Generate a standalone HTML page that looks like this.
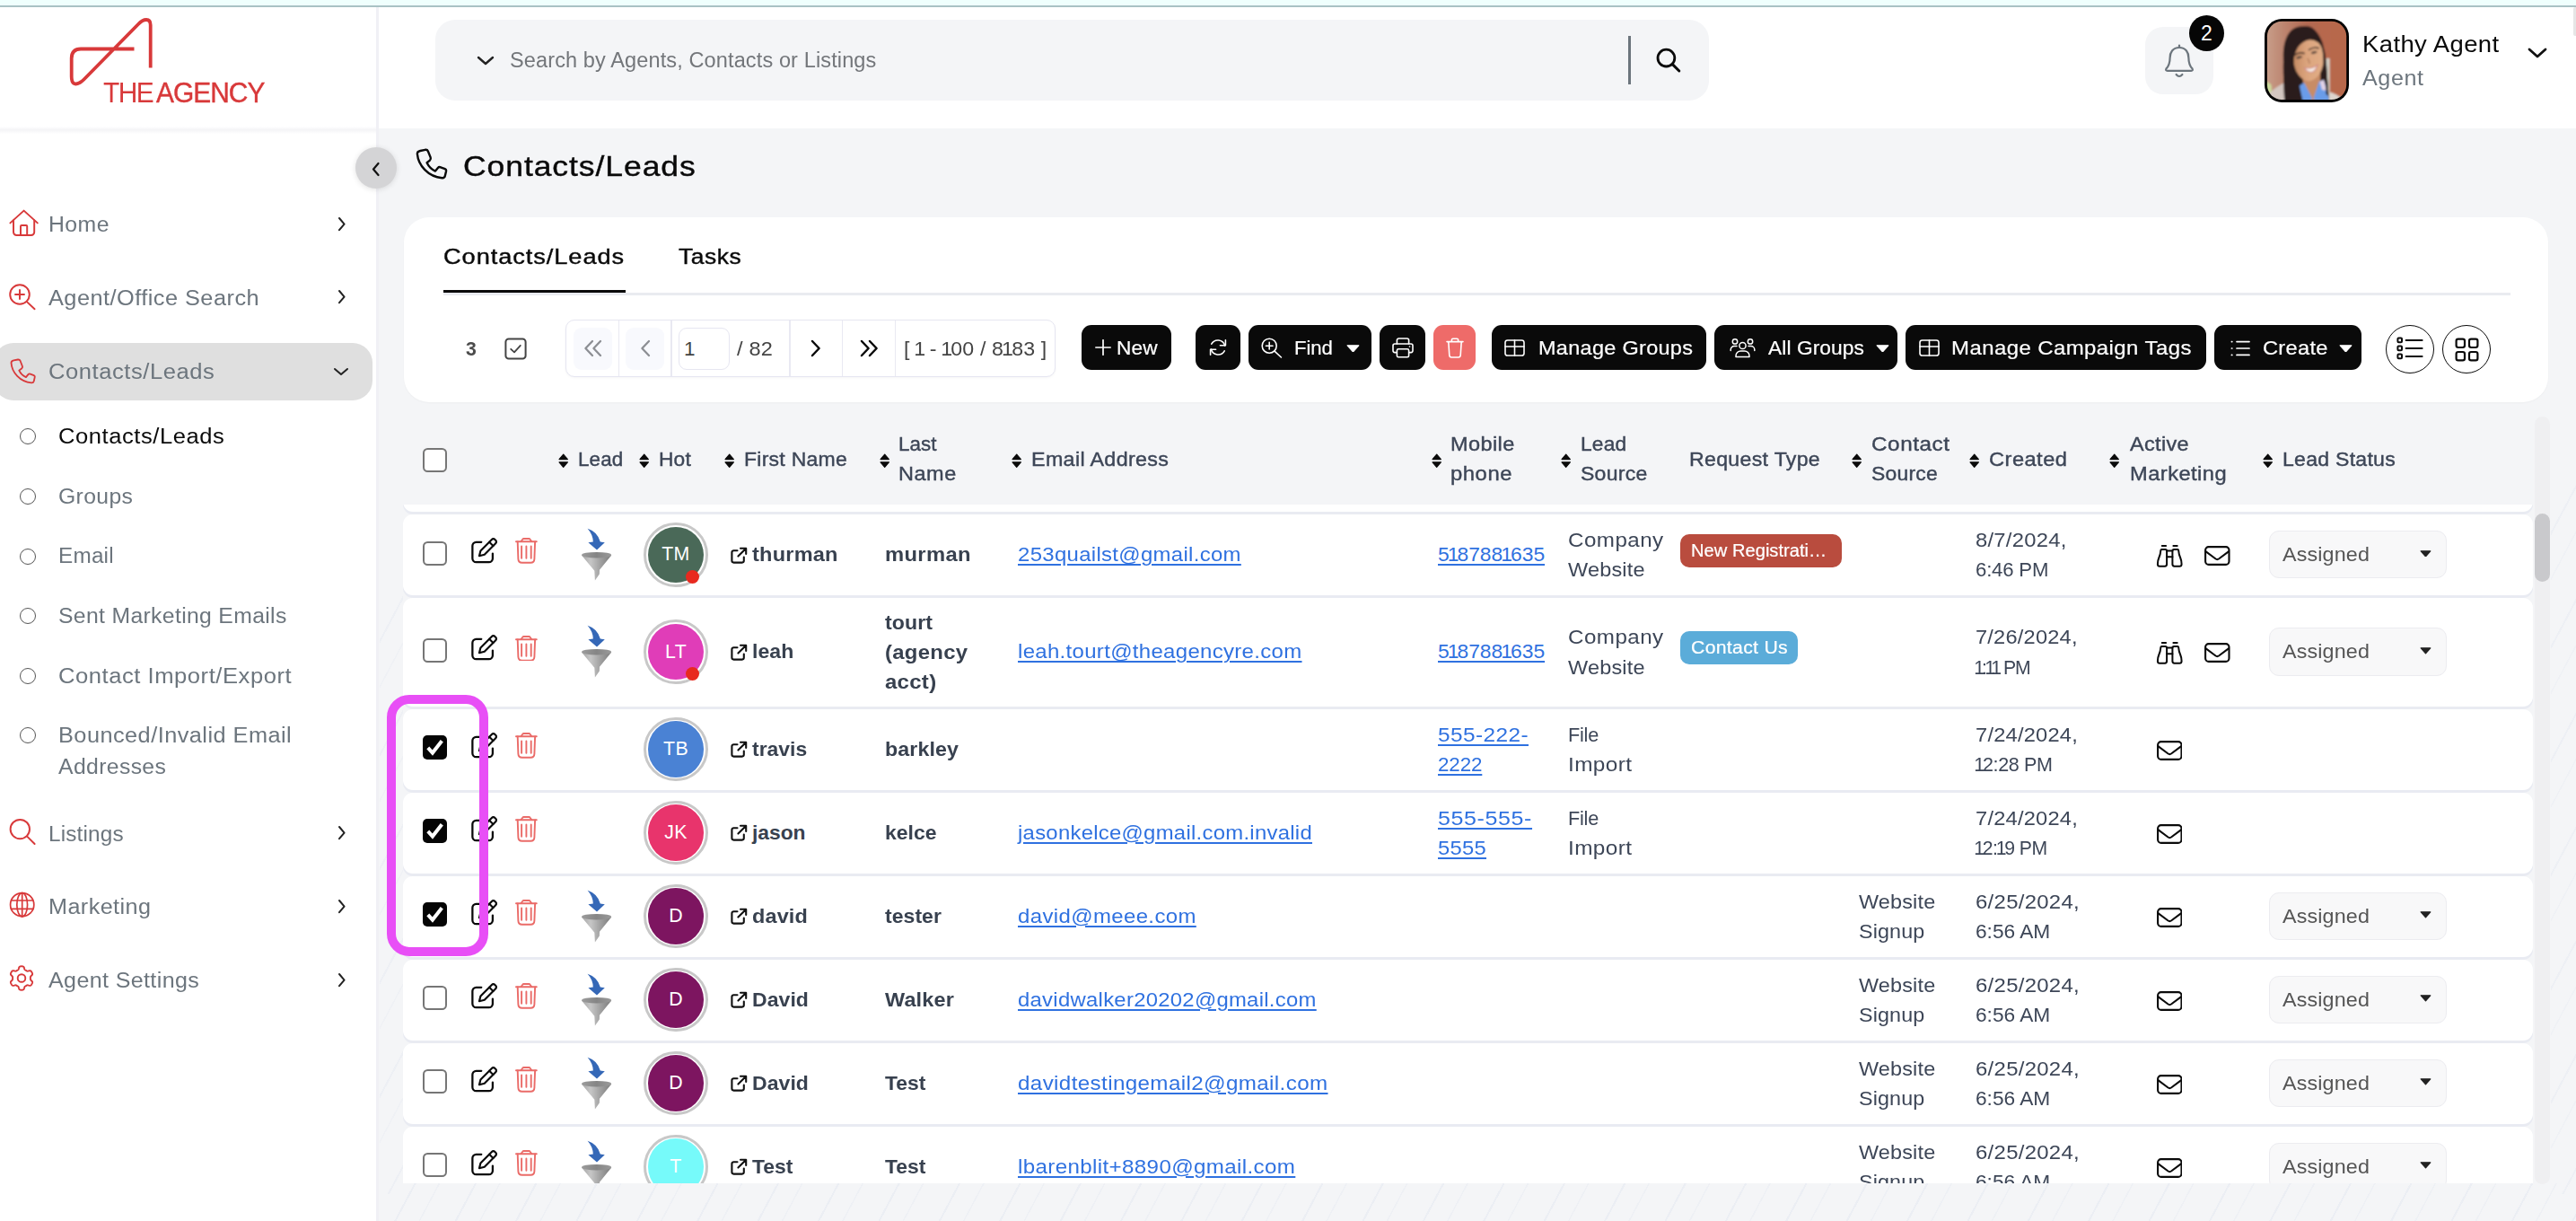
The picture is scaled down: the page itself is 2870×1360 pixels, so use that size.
<!DOCTYPE html>
<html><head><meta charset="utf-8"><title>Contacts/Leads</title>
<style>
html,body{margin:0;padding:0;}
body{width:2870px;height:1360px;overflow:hidden;position:relative;background:#f4f5f7;font-family:"Liberation Sans",sans-serif;}
.b{position:absolute;box-sizing:border-box;display:block;}
.t{position:absolute;white-space:nowrap;display:block;}
.m{-webkit-text-stroke:0.4px currentColor;}
.mw{-webkit-text-stroke:0.22px currentColor;}
.lnk{text-decoration:underline;text-decoration-thickness:1.7px;text-underline-offset:3px;}
</style></head><body>
<svg width="0" height="0" style="position:absolute"><defs><filter id="blur1" x="-10%" y="-10%" width="120%" height="120%"><feGaussianBlur stdDeviation="0.55"/></filter><filter id="blur2" x="-10%" y="-10%" width="120%" height="120%"><feGaussianBlur stdDeviation="0.95"/></filter></defs></svg>

<div class="b" style="left:0px;top:0px;width:2870px;height:8px;background:#effffd;border-bottom:2px solid #a9c2c4;"></div>
<div class="b" style="left:421px;top:8px;width:2449px;height:135px;background:#fff;"></div>
<div class="b" style="left:423px;top:1318px;width:2447px;height:42px;background:repeating-linear-gradient(118deg, rgba(205,214,232,0) 0 34px, rgba(205,214,232,0.22) 34px 36px, rgba(205,214,232,0) 36px 58px, rgba(205,214,232,0.16) 58px 59.5px);"></div>
<div class="b" style="left:423px;top:640px;width:26px;height:690px;background:repeating-linear-gradient(118deg, rgba(205,214,232,0) 0 34px, rgba(205,214,232,0.22) 34px 36px, rgba(205,214,232,0) 36px 58px, rgba(205,214,232,0.16) 58px 59.5px);opacity:0.8;"></div>
<div class="b" style="left:2842px;top:520px;width:28px;height:810px;background:repeating-linear-gradient(118deg, rgba(205,214,232,0) 0 34px, rgba(205,214,232,0.22) 34px 36px, rgba(205,214,232,0) 36px 58px, rgba(205,214,232,0.16) 58px 59.5px);opacity:0.8;"></div>
<div class="b" style="left:485px;top:22px;width:1419px;height:90px;background:#f4f5f7;border-radius:22px;"></div>
<svg class="b" style="left:531px;top:61.5px;" width="20" height="12" viewBox="0 0 20 12"><path d="M2 2 L10 9 L18 2" fill="none" stroke="#222" stroke-width="2.4" stroke-linecap="round" stroke-linejoin="round"/></svg>
<span class="t" style="left:568px;top:52.3px;font-size:23px;line-height:30px;color:#73767a;letter-spacing:0.12px;transform:scaleX(1.022);transform-origin:0 50%;">Search by Agents, Contacts or Listings</span>
<div class="b" style="left:1814px;top:40px;width:3px;height:54px;background:#6c757d;"></div>
<svg class="b" style="left:1844px;top:52px;" width="30" height="30" viewBox="0 0 30 30"><circle cx="12.4" cy="12.6" r="9.4" fill="none" stroke="#0a0a0a" stroke-width="2.8"/><path d="M19.4 19.6 L26.8 27" stroke="#0a0a0a" stroke-width="3" stroke-linecap="round"/></svg>
<div class="b" style="left:2390px;top:30px;width:76px;height:75px;background:#f4f5f7;border-radius:20px;"></div>
<svg class="b" style="left:2411px;top:49px;" width="34" height="40" viewBox="0 0 34 40"><g fill="none" stroke="#6c757d" stroke-width="2.2" stroke-linecap="round" stroke-linejoin="round"><path d="M17 1.6 V4"/><path d="M17 4 C9.6 4 6.6 9.6 6.6 15.4 C6.6 22.6 4.6 25.2 2.4 27.6 Q1.4 29.8 3.8 29.8 H30.2 Q32.6 29.8 31.6 27.6 C29.4 25.2 27.4 22.6 27.4 15.4 C27.4 9.6 24.4 4 17 4 Z"/><path d="M13.6 34 Q17 38 20.4 34"/></g></svg>
<div class="b" style="left:2439px;top:17px;width:39px;height:40px;background:#060606;border-radius:50%;"></div>
<span class="t" style="left:2439px;top:21.5px;font-size:23px;line-height:30px;color:#fff;width:39px;text-align:center;">2</span>
<svg class="b" style="left:2523px;top:21px;" width="94" height="93" viewBox="0 0 94 93"><defs><clipPath id="avc"><rect x="2.9" y="2.8" width="88.3" height="87.2" rx="16.5"/></clipPath><linearGradient id="bk" x1="0" y1="0" x2="1" y2="0"><stop offset="0" stop-color="#c9a08c"/><stop offset="0.22" stop-color="#bd8671"/><stop offset="0.5" stop-color="#b36a52"/><stop offset="1" stop-color="#b5664a"/></linearGradient><linearGradient id="fc" x1="0" y1="0" x2="1" y2="0"><stop offset="0" stop-color="#c58a63"/><stop offset="0.45" stop-color="#dca57e"/><stop offset="1" stop-color="#e2ae87"/></linearGradient></defs><rect x="0" y="0" width="94" height="93" rx="19.5" fill="#000"/><g clip-path="url(#avc)"><g filter="url(#blur2)"><rect x="0" y="0" width="94" height="93" fill="url(#bk)"/><path d="M60 0 H94 V93 H74 Z" fill="#b9694c" opacity="0.6"/><rect x="69" y="44" width="3.6" height="42" fill="#d6d3c8"/><path d="M0 70 Q5 70 7.5 74 L8 82 L0 84 Z" fill="#cbdc9c"/><path d="M2 92 L4 84 Q12 76 24 70 L42 76 L46 93 Z" fill="#d3c6c0"/><path d="M66 93 L70 81 Q80 83 88 90 L90 93 Z" fill="#ddd6cf"/><path d="M22.2 93 Q21 64 20.8 44 Q20 22 30 12.4 Q36 8 42 8.2 Q48 7.6 52.6 9.4 Q60 14 64.6 26.6 Q68 38 69 50 Q70 66 71.4 84 L72 93 Z" fill="#2a1d1b"/><path d="M42 60 L62 58 L62 80 L54 91 L44 80 Z" fill="#c88c66"/><path d="M37 76 L44 71 L54 90 L61 69.5 L66 68 L71 84 L72 93 L40 93 Z" fill="#6a9ce9"/><path d="M61.5 70 L66 68 L69 80 L64 79 Z" fill="#e3d3e6"/><path d="M50 93 L54 88 L57 93 Z" fill="#c88c66"/><path d="M44 25 Q52 21 60 26.6 Q65.4 32 65.6 44 Q65.8 54 61.6 61 Q56 69 49 69.4 Q41 69 35.4 58.6 Q31.6 50 32.4 40 Q34 30 44 25 Z" fill="url(#fc)"/><path d="M20.8 60 Q20 30 31 16 Q42 8 54 12 Q62 18 64.6 28 Q58 22 50 23 Q42 25 37 32 Q32.5 40 32.4 50 Q33 62 37.4 66 Q39 76 43 93 L22.2 93 Z" fill="#2a1d1b"/><path d="M64 28 Q68 40 69 52 Q70 70 71.4 86 L68.6 84 Q68 60 65.6 46 Z" fill="#2a1d1b"/><path d="M33.6 40.4 Q38.4 36.8 44 38.4 M49.6 34.4 Q55 30.8 60 32.6" stroke="#3a2a24" stroke-width="1.7" fill="none" stroke-linecap="round"/><ellipse cx="38.6" cy="42.9" rx="3.4" ry="1.5" fill="#5a463c" transform="rotate(-14 38.6 42.9)"/><ellipse cx="55.2" cy="37.4" rx="3.4" ry="1.5" fill="#5a463c" transform="rotate(-14 55.2 37.4)"/><path d="M48 44 Q50.4 48 49.8 50" stroke="#b98362" stroke-width="1.6" fill="none"/><path d="M44.4 54.6 Q52 56.4 59.2 51.2 Q56 60.6 50.4 59.4 Q46.6 58.6 44.4 54.6 Z" fill="#f7efe9" stroke="#d08a84" stroke-width="1.1"/></g></g></svg>
<span class="t" style="left:2632px;top:32.2px;font-size:26px;line-height:34px;color:#0a0a0a;letter-spacing:0.37px;transform:scaleX(1.057);transform-origin:0 50%;">Kathy Agent</span>
<span class="t" style="left:2632px;top:71.8px;font-size:23px;line-height:30px;color:#6c757d;letter-spacing:0.54px;transform:scaleX(1.092);transform-origin:0 50%;">Agent</span>
<svg class="b" style="left:2816px;top:52.5px;" width="22" height="13" viewBox="0 0 22 13"><path d="M2 2 L11 10 L20 2" fill="none" stroke="#111" stroke-width="2.8" stroke-linecap="round" stroke-linejoin="round"/></svg>
<div class="b" style="left:2867px;top:8px;width:3px;height:32px;background:#e6e6e6;border-radius:2px 0 0 2px;"></div>
<div class="b" style="left:0px;top:8px;width:421.5px;height:1352px;background:#fff;border-right:3px solid #f0f0f5;"></div>
<div class="b" style="left:0px;top:141px;width:418.5px;height:8px;background:linear-gradient(#fff,#f4f4f6 45%,#fff);"></div>
<svg class="b" style="left:70px;top:14px;" width="240" height="110" viewBox="0 0 240 110"><path d="M79.5 40.5 H20 Q9.7 40.5 9.7 51 V71 Q9.7 83 19 78 Q21.5 76.5 23.5 74.5 L84 13 Q88.5 8 93 8 Q97.7 8 97.7 14 V61.5" fill="none" stroke="#d8393a" stroke-width="3.8" stroke-linejoin="round"/></svg>
<span class="t" style="left:115px;top:83.3px;font-size:30.5px;line-height:40px;color:#d8393a;transform:scaleX(0.98);transform-origin:left center;-webkit-text-stroke:0.4px #d8393a;"><span style="letter-spacing:-1.6px;-webkit-text-stroke:0">THE</span><span style="letter-spacing:-1px;margin-left:4px">AGENCY</span></span>
<div class="b" style="left:395.5px;top:164px;width:46px;height:46px;background:#d4d4d6;border-radius:50%;box-shadow:0 1px 6px rgba(0,0,0,0.12);"></div>
<svg class="b" style="left:412.75px;top:179.5px;" width="10.5" height="17.0" viewBox="0 0 10.5 17.0"><path d="M8.5 2 L3 8.5 L8.5 15.0" fill="none" stroke="#111" stroke-width="2.2" stroke-linecap="round" stroke-linejoin="round"/></svg>
<svg class="b" style="left:10px;top:233px;" width="34" height="31" viewBox="0 0 34 31"><g fill="none" stroke="#d8393a" stroke-width="1.95" stroke-linecap="round" stroke-linejoin="round"><path d="M1.4 15.4 L16.6 1.6 L31.8 15.4"/><path d="M5 12.4 V25.6 a3.4 3.4 0 0 0 3.4 3.4 H24.8 a3.4 3.4 0 0 0 3.4 -3.4 V12.4"/><path d="M13 28.8 V19 a1 1 0 0 1 1 -1 H19.2 a1 1 0 0 1 1 1 V28.8"/></g></svg><span class="t" style="left:54.3px;top:235.2px;font-size:23.5px;line-height:31px;color:#6c757d;letter-spacing:0.44px;transform:scaleX(1.055);transform-origin:0 50%;">Home</span><svg class="b" style="left:375.9px;top:240.79999999999998px;" width="10.6" height="17.2" viewBox="0 0 10.6 17.2"><path d="M2 2 L7.6 8.6 L2 15.2" fill="none" stroke="#222" stroke-width="2.0" stroke-linecap="round" stroke-linejoin="round"/></svg>
<svg class="b" style="left:9px;top:314.6px;" width="32" height="32" viewBox="0 0 32 32"><g fill="none" stroke="#d8393a" stroke-width="1.95" stroke-linecap="round" stroke-linejoin="round"><circle cx="13" cy="13" r="10.8"/><path d="M21.2 21.4 L29.6 29.2 M8 13 H18 M13 8 V18"/></g></svg><span class="t" style="left:54.3px;top:316.5px;font-size:23.5px;line-height:31px;color:#6c757d;letter-spacing:0.43px;transform:scaleX(1.078);transform-origin:0 50%;">Agent/Office Search</span><svg class="b" style="left:375.9px;top:322.09999999999997px;" width="10.6" height="17.2" viewBox="0 0 10.6 17.2"><path d="M2 2 L7.6 8.6 L2 15.2" fill="none" stroke="#222" stroke-width="2.0" stroke-linecap="round" stroke-linejoin="round"/></svg>
<div class="b" style="left:-7px;top:382.0px;width:422px;height:64px;background:#dfdfdf;border-radius:22px;"></div><svg class="b" style="left:10.5px;top:398.5px;" width="29" height="29" viewBox="0 0 31 31"><g fill="none" stroke="#d8393a" stroke-width="1.95" stroke-linecap="round" stroke-linejoin="round"><path d="M4.6 2.6 L9.6 1.6 Q11.6 1.4 12.4 3.2 L14.8 9.4 Q15.4 11 14 12.2 L11 14.6 Q13.6 20 19.2 22.6 L21.8 19.4 Q22.8 18.2 24.4 18.8 L28.6 20.4 Q30 21 29.6 22.8 L28.6 27.2 Q28 29.4 25.6 29.2 C12 28 2.4 17 1.6 5.6 Q1.6 3.2 4.6 2.6 Z"/></g></svg><span class="t" style="left:54.3px;top:399.0px;font-size:23.5px;line-height:31px;color:#6c757d;letter-spacing:0.51px;transform:scaleX(1.088);transform-origin:0 50%;">Contacts/Leads</span><svg class="b" style="left:371px;top:408.5px;" width="18" height="11" viewBox="0 0 18 11"><path d="M2 2 L9 8 L16 2" fill="none" stroke="#222" stroke-width="2.0" stroke-linecap="round" stroke-linejoin="round"/></svg>
<svg class="b" style="left:9.6px;top:910.6px;" width="31" height="32" viewBox="0 0 31 32"><g fill="none" stroke="#d8393a" stroke-width="1.95" stroke-linecap="round" stroke-linejoin="round"><circle cx="12.3" cy="12.6" r="10.7"/><path d="M20.2 20.6 L28.6 29"/></g></svg><span class="t" style="left:54.3px;top:913.5px;font-size:23.5px;line-height:31px;color:#6c757d;letter-spacing:0.17px;transform:scaleX(1.034);transform-origin:0 50%;">Listings</span><svg class="b" style="left:375.9px;top:919.1px;" width="10.6" height="17.2" viewBox="0 0 10.6 17.2"><path d="M2 2 L7.6 8.6 L2 15.2" fill="none" stroke="#222" stroke-width="2.0" stroke-linecap="round" stroke-linejoin="round"/></svg>
<svg class="b" style="left:9.6px;top:993.2px;" width="29.4" height="29.4" viewBox="0 0 30 30"><g fill="none" stroke="#d8393a" stroke-width="1.75" stroke-linecap="round" stroke-linejoin="round"><circle cx="15" cy="15" r="13.4"/><ellipse cx="15" cy="15" rx="6" ry="13.4"/><path d="M15 1.6 V28.4 M2.6 10.2 H27.4 M2.6 19.8 H27.4"/></g></svg><span class="t" style="left:54.3px;top:995.0px;font-size:23.5px;line-height:31px;color:#6c757d;letter-spacing:0.41px;transform:scaleX(1.071);transform-origin:0 50%;">Marketing</span><svg class="b" style="left:375.9px;top:1000.6px;" width="10.6" height="17.2" viewBox="0 0 10.6 17.2"><path d="M2 2 L7.6 8.6 L2 15.2" fill="none" stroke="#222" stroke-width="2.0" stroke-linecap="round" stroke-linejoin="round"/></svg>
<svg class="b" style="left:8.8px;top:1074.4px;" width="30" height="31" viewBox="0 0 30 31"><g fill="none" stroke="#d8393a" stroke-width="1.9" stroke-linecap="round" stroke-linejoin="round"><circle cx="15" cy="15.5" r="4.3"/><path d="M24.90 15.50 L24.90 15.07 L24.89 14.63 L24.92 14.19 L25.04 13.73 L25.43 13.19 L26.16 12.51 L26.85 11.77 L27.13 11.09 L27.10 10.49 L26.93 9.94 L26.70 9.41 L26.43 8.90 L26.13 8.41 L25.79 7.95 L25.39 7.53 L24.88 7.21 L24.16 7.11 L23.17 7.33 L22.21 7.63 L21.55 7.69 L21.09 7.56 L20.70 7.36 L20.32 7.14 L19.95 6.93 L19.57 6.71 L19.20 6.50 L18.83 6.26 L18.49 5.92 L18.21 5.32 L17.99 4.34 L17.69 3.37 L17.24 2.79 L16.71 2.52 L16.15 2.38 L15.58 2.32 L15.00 2.30 L14.42 2.32 L13.85 2.38 L13.29 2.52 L12.76 2.79 L12.31 3.37 L12.01 4.34 L11.79 5.32 L11.51 5.92 L11.17 6.26 L10.80 6.50 L10.43 6.71 L10.05 6.93 L9.68 7.14 L9.30 7.36 L8.91 7.56 L8.45 7.69 L7.79 7.63 L6.83 7.33 L5.84 7.11 L5.12 7.21 L4.61 7.53 L4.21 7.95 L3.87 8.41 L3.57 8.90 L3.30 9.41 L3.07 9.94 L2.90 10.49 L2.87 11.09 L3.15 11.77 L3.84 12.51 L4.57 13.19 L4.96 13.73 L5.08 14.19 L5.11 14.63 L5.10 15.07 L5.10 15.50 L5.10 15.93 L5.11 16.37 L5.08 16.81 L4.96 17.27 L4.57 17.81 L3.84 18.49 L3.15 19.23 L2.87 19.91 L2.90 20.51 L3.07 21.06 L3.30 21.59 L3.57 22.10 L3.87 22.59 L4.21 23.05 L4.61 23.47 L5.12 23.79 L5.84 23.89 L6.83 23.67 L7.79 23.37 L8.45 23.31 L8.91 23.44 L9.30 23.64 L9.68 23.86 L10.05 24.07 L10.43 24.29 L10.80 24.50 L11.17 24.74 L11.51 25.08 L11.79 25.68 L12.01 26.66 L12.31 27.63 L12.76 28.21 L13.29 28.48 L13.85 28.62 L14.42 28.68 L15.00 28.70 L15.58 28.68 L16.15 28.62 L16.71 28.48 L17.24 28.21 L17.69 27.63 L17.99 26.66 L18.21 25.68 L18.49 25.08 L18.83 24.74 L19.20 24.50 L19.57 24.29 L19.95 24.07 L20.32 23.86 L20.70 23.64 L21.09 23.44 L21.55 23.31 L22.21 23.37 L23.17 23.67 L24.16 23.89 L24.88 23.79 L25.39 23.47 L25.79 23.05 L26.13 22.59 L26.43 22.10 L26.70 21.59 L26.93 21.06 L27.10 20.51 L27.13 19.91 L26.85 19.23 L26.16 18.49 L25.43 17.81 L25.04 17.27 L24.92 16.81 L24.89 16.37 L24.90 15.93 Z"/></g></svg><span class="t" style="left:54.3px;top:1077.0px;font-size:23.5px;line-height:31px;color:#6c757d;letter-spacing:0.36px;transform:scaleX(1.065);transform-origin:0 50%;">Agent Settings</span><svg class="b" style="left:375.9px;top:1082.6000000000001px;" width="10.6" height="17.2" viewBox="0 0 10.6 17.2"><path d="M2 2 L7.6 8.6 L2 15.2" fill="none" stroke="#222" stroke-width="2.0" stroke-linecap="round" stroke-linejoin="round"/></svg>
<div class="b" style="left:21.8px;top:477px;width:18.2px;height:18.2px;border:1.5px solid #555;border-radius:50%;"></div><span class="t" style="left:64.8px;top:470.5px;font-size:23.5px;line-height:31px;color:#0a0a0a;letter-spacing:0.51px;transform:scaleX(1.088);transform-origin:0 50%;">Contacts/Leads</span>
<div class="b" style="left:21.8px;top:544px;width:18.2px;height:18.2px;border:1.5px solid #555;border-radius:50%;"></div><span class="t" style="left:64.8px;top:537.5px;font-size:23.5px;line-height:31px;color:#6c757d;letter-spacing:0.34px;transform:scaleX(1.052);transform-origin:0 50%;">Groups</span>
<div class="b" style="left:21.8px;top:610.5px;width:18.2px;height:18.2px;border:1.5px solid #555;border-radius:50%;"></div><span class="t" style="left:64.8px;top:604.0px;font-size:23.5px;line-height:31px;color:#6c757d;letter-spacing:0.21px;transform:scaleX(1.034);transform-origin:0 50%;">Email</span>
<div class="b" style="left:21.8px;top:677px;width:18.2px;height:18.2px;border:1.5px solid #555;border-radius:50%;"></div><span class="t" style="left:64.8px;top:670.5px;font-size:23.5px;line-height:31px;color:#6c757d;letter-spacing:0.31px;transform:scaleX(1.054);transform-origin:0 50%;">Sent Marketing Emails</span>
<div class="b" style="left:21.8px;top:744px;width:18.2px;height:18.2px;border:1.5px solid #555;border-radius:50%;"></div><span class="t" style="left:64.8px;top:737.5px;font-size:23.5px;line-height:31px;color:#6c757d;letter-spacing:0.48px;transform:scaleX(1.090);transform-origin:0 50%;">Contact Import/Export</span>
<div class="b" style="left:21.8px;top:810px;width:18.2px;height:18.2px;border:1.5px solid #555;border-radius:50%;"></div><span class="t" style="left:64.8px;top:803.5px;font-size:23.5px;line-height:31px;color:#6c757d;letter-spacing:0.43px;transform:scaleX(1.077);transform-origin:0 50%;">Bounced/Invalid Email</span>
<span class="t" style="left:64.8px;top:838.5px;font-size:23.5px;line-height:31px;color:#6c757d;letter-spacing:0.34px;transform:scaleX(1.054);transform-origin:0 50%;">Addresses</span>
<svg class="b" style="left:463px;top:165px;" width="36" height="36" viewBox="0 0 36 36"><path d="M5.2 3 L10.8 1.8 Q13 1.4 13.9 3.5 L16.7 10.4 Q17.4 12.2 15.9 13.6 L12.6 16.3 Q15.6 22.6 22 25.6 L24.9 22 Q26.1 20.6 27.9 21.3 L32.8 23.2 Q34.4 23.9 34 25.9 L32.8 31 Q32.2 33.5 29.5 33.2 C14 31.9 3 19.4 1.9 6.4 Q1.8 3.7 5.2 3 Z" fill="none" stroke="#0a0a0a" stroke-width="2.4" stroke-linejoin="round"/></svg>
<span class="t m" style="left:516px;top:163.9px;font-size:32px;line-height:42px;color:#0a0a0a;font-weight:500;letter-spacing:0.84px;transform:scaleX(1.109);transform-origin:0 50%;">Contacts/Leads</span>
<div class="b" style="left:450px;top:242px;width:2389px;height:206px;background:#fff;border-radius:28px;box-shadow:0 1px 2px rgba(0,0,0,0.03);"></div>
<span class="t m" style="left:494.4px;top:270.2px;font-size:24.5px;line-height:32px;color:#0a0a0a;font-weight:500;letter-spacing:0.84px;transform:scaleX(1.110);transform-origin:0 50%;">Contacts/Leads</span>
<span class="t m" style="left:756px;top:270.2px;font-size:24.5px;line-height:32px;color:#0a0a0a;font-weight:500;letter-spacing:0.49px;transform:scaleX(1.078);transform-origin:0 50%;">Tasks</span>
<div class="b" style="left:494px;top:326px;width:2303px;height:2.5px;background:#e9ebf0;"></div>
<div class="b" style="left:494px;top:322.8px;width:203px;height:3.4px;background:#0a0a0a;"></div>
<span class="t" style="left:518.6px;top:373.5px;font-size:22.5px;line-height:29px;color:#4b4b4b;font-weight:700;letter-spacing:-0.41px;transform:scaleX(0.942);transform-origin:0 50%;">3</span>
<svg class="b" style="left:562px;top:376px;" width="25" height="25" viewBox="0 0 25 25"><rect x="1.4" y="1.4" width="22.2" height="22.2" rx="3.4" fill="none" stroke="#444" stroke-width="2"/><path d="M7.2 12.8 L11 16.4 L17.8 8.8" fill="none" stroke="#444" stroke-width="1.8" stroke-linecap="round" stroke-linejoin="round"/></svg>
<div class="b" style="left:630px;top:356px;width:546px;height:64px;background:#fff;border:1.5px solid #e6e6f1;border-radius:10px;box-shadow:0 1px 3px rgba(0,0,0,0.04);"></div>
<div class="b" style="left:688.9px;top:357px;width:1.2px;height:62px;background:#e9e9f2;"></div>
<div class="b" style="left:747.4px;top:357px;width:1.2px;height:62px;background:#e9e9f2;"></div>
<div class="b" style="left:879.4px;top:357px;width:1.2px;height:62px;background:#e9e9f2;"></div>
<div class="b" style="left:938.0px;top:357px;width:1.2px;height:62px;background:#e9e9f2;"></div>
<div class="b" style="left:997.1px;top:357px;width:1.2px;height:62px;background:#e9e9f2;"></div>
<div class="b" style="left:639px;top:365px;width:43px;height:47px;background:#f8f9fd;border-radius:9px;"></div>
<div class="b" style="left:697px;top:365px;width:43px;height:47px;background:#f8f9fd;border-radius:9px;"></div>
<svg class="b" style="left:650px;top:378px;" width="22" height="20" viewBox="0 0 22 20"><path d="M10 2 L2.4 10 L10 18 M19 2 L11.4 10 L19 18" fill="none" stroke="#8d8f94" stroke-width="2.3" stroke-linecap="round" stroke-linejoin="round"/></svg>
<svg class="b" style="left:712px;top:378px;" width="14" height="20" viewBox="0 0 14 20"><path d="M11 2 L3.4 10 L11 18" fill="none" stroke="#8d8f94" stroke-width="2.3" stroke-linecap="round" stroke-linejoin="round"/></svg>
<div class="b" style="left:756px;top:365px;width:57px;height:47px;background:#fff;border:1.5px solid #e6e6f1;border-radius:9px;"></div>
<span class="t" style="left:762px;top:373.5px;font-size:22.5px;line-height:29px;color:#444;">1</span>
<span class="t" style="left:820.8px;top:373.5px;font-size:22.5px;line-height:29px;color:#444;letter-spacing:0.22px;transform:scaleX(1.046);transform-origin:0 50%;">/ 82</span>
<svg class="b" style="left:902px;top:378px;" width="14" height="20" viewBox="0 0 14 20"><path d="M3 2 L10.6 10 L3 18" fill="none" stroke="#0a0a0a" stroke-width="2.5" stroke-linecap="round" stroke-linejoin="round"/></svg>
<svg class="b" style="left:957px;top:378px;" width="22" height="20" viewBox="0 0 22 20"><path d="M3 2 L10.6 10 L3 18 M12 2 L19.6 10 L12 18" fill="none" stroke="#0a0a0a" stroke-width="2.5" stroke-linecap="round" stroke-linejoin="round"/></svg>
<span class="t" style="left:1006.7px;top:373.5px;font-size:22.5px;line-height:29px;color:#444;letter-spacing:0.13px;transform:scaleX(1.029);transform-origin:0 50%;">[ <span style="margin:0 -0.085em">1</span> - <span style="margin:0 -0.085em">1</span>00 / 8<span style="margin:0 -0.085em">1</span>83 ]</span>
<div class="b" style="left:1205px;top:362px;width:100px;height:50px;background:#0a0a0a;border-radius:11px;"></div>
<svg class="b" style="left:1219.7px;top:378px;" width="18" height="18" viewBox="0 0 18 18"><g fill="none" stroke="#fff" stroke-width="1.7" stroke-linecap="round" stroke-linejoin="round"><path d="M9 0.8 V17.2 M0.8 9 H17.2"/></g></svg>
<span class="t mw" style="left:1244.4px;top:373.0px;font-size:22.5px;line-height:29px;color:#fff;font-weight:500;letter-spacing:0.07px;transform:scaleX(1.008);transform-origin:0 50%;">New</span>
<div class="b" style="left:1332px;top:362px;width:50px;height:50px;background:#0a0a0a;border-radius:11px;"></div>
<svg class="b" style="left:1346px;top:377px;" width="22" height="20" viewBox="0 0 22 20"><g fill="none" stroke="#fff" stroke-width="1.6" stroke-linecap="round" stroke-linejoin="round"><path d="M18.6 8 A8 8 0 0 0 3.8 6.2 M3.4 12 A8 8 0 0 0 18.2 13.8"/><path d="M19.4 1.8 V7.8 H13.4 M2.6 18.2 V12.2 H8.6"/></g></svg>
<div class="b" style="left:1391px;top:362px;width:137px;height:50px;background:#0a0a0a;border-radius:11px;"></div>
<svg class="b" style="left:1404.5px;top:376px;" width="24" height="23" viewBox="0 0 24 23"><g fill="none" stroke="#fff" stroke-width="1.6" stroke-linecap="round" stroke-linejoin="round"><circle cx="9.2" cy="9.2" r="8"/><path d="M15 15.2 L22.4 22 M5.4 9.2 H13 M9.2 5.4 V13"/></g></svg>
<span class="t mw" style="left:1442.4px;top:373.0px;font-size:22.5px;line-height:29px;color:#fff;font-weight:500;letter-spacing:-0.10px;transform:scaleX(0.984);transform-origin:0 50%;">Find</span>
<svg class="b" style="left:1499.5px;top:383.75px;" width="15" height="8.5" viewBox="0 0 15 8.5"><path d="M1.2 0.8 H13.8 L7.5 7.9 Z" fill="#fff" stroke="#fff" stroke-width="1.2" stroke-linejoin="round"/></svg>
<div class="b" style="left:1537px;top:362px;width:51px;height:50px;background:#0a0a0a;border-radius:11px;"></div>
<svg class="b" style="left:1550.5px;top:376px;" width="24" height="23" viewBox="0 0 24 23"><g fill="none" stroke="#fff" stroke-width="1.6" stroke-linecap="round" stroke-linejoin="round"><path d="M5.4 7 V3 a2 2 0 0 1 2 -2 H16.6 a2 2 0 0 1 2 2 V7"/><path d="M5.2 16.6 H3 a2 2 0 0 1 -2 -2 V9 a2 2 0 0 1 2 -2 H21 a2 2 0 0 1 2 2 V14.6 a2 2 0 0 1 -2 2 H18.8"/><rect x="5.4" y="12.8" width="13.2" height="9" rx="1.6"/><path d="M19.4 10 h0.2"/></g></svg>
<div class="b" style="left:1597px;top:362px;width:47px;height:50px;background:#ee6b69;border-radius:11px;"></div>
<svg class="b" style="left:1610.5px;top:375.5px;" width="20" height="23" viewBox="0 0 20 23"><g fill="none" stroke="#fff" stroke-width="1.6" stroke-linecap="round" stroke-linejoin="round"><path d="M1 4.6 H19 M6.4 4.4 V2.6 a1.4 1.4 0 0 1 1.4 -1.4 h4.4 a1.4 1.4 0 0 1 1.4 1.4 V4.4"/><path d="M2.8 4.8 L3.8 19.8 a2.4 2.4 0 0 0 2.4 2.2 h7.6 a2.4 2.4 0 0 0 2.4 -2.2 L17.2 4.8"/></g></svg>
<div class="b" style="left:1662px;top:362px;width:239px;height:50px;background:#0a0a0a;border-radius:11px;"></div>
<svg class="b" style="left:1675.5px;top:378px;" width="23" height="19" viewBox="0 0 23 19"><g fill="none" stroke="#fff" stroke-width="1.6" stroke-linecap="round" stroke-linejoin="round"><rect x="1" y="1" width="21" height="17" rx="2.6"/><path d="M1 8 H22 M11.5 1 V18"/></g></svg>
<span class="t mw" style="left:1713.5px;top:373.0px;font-size:22.5px;line-height:29px;color:#fff;font-weight:500;letter-spacing:0.28px;transform:scaleX(1.044);transform-origin:0 50%;">Manage Groups</span>
<div class="b" style="left:1910px;top:362px;width:204px;height:50px;background:#0a0a0a;border-radius:11px;"></div>
<svg class="b" style="left:1927px;top:376px;" width="29" height="23" viewBox="0 0 29 23"><g fill="none" stroke="#fff" stroke-width="1.5" stroke-linecap="round" stroke-linejoin="round"><circle cx="14.5" cy="9" r="3.6"/><path d="M7 21.6 V20.4 a5.4 5.4 0 0 1 5.4 -5.4 h4.2 a5.4 5.4 0 0 1 5.4 5.4 V21.6 Z"/><circle cx="6" cy="4.4" r="2.7"/><circle cx="23" cy="4.4" r="2.7"/><path d="M1.2 14.4 V13.6 a4 4 0 0 1 4 -4 H8 M27.8 14.4 V13.6 a4 4 0 0 0 -4 -4 H21"/></g></svg>
<span class="t mw" style="left:1970px;top:373.0px;font-size:22.5px;line-height:29px;color:#fff;font-weight:500;letter-spacing:0.07px;transform:scaleX(1.012);transform-origin:0 50%;">All Groups</span>
<svg class="b" style="left:2089.5px;top:383.75px;" width="15" height="8.5" viewBox="0 0 15 8.5"><path d="M1.2 0.8 H13.8 L7.5 7.9 Z" fill="#fff" stroke="#fff" stroke-width="1.2" stroke-linejoin="round"/></svg>
<div class="b" style="left:2123px;top:362px;width:335px;height:50px;background:#0a0a0a;border-radius:11px;"></div>
<svg class="b" style="left:2137.5px;top:378px;" width="23" height="19" viewBox="0 0 23 19"><g fill="none" stroke="#fff" stroke-width="1.6" stroke-linecap="round" stroke-linejoin="round"><rect x="1" y="1" width="21" height="17" rx="2.6"/><path d="M1 8 H22 M11.5 1 V18"/></g></svg>
<span class="t mw" style="left:2174.4px;top:373.0px;font-size:22.5px;line-height:29px;color:#fff;font-weight:500;letter-spacing:0.40px;transform:scaleX(1.065);transform-origin:0 50%;">Manage Campaign Tags</span>
<div class="b" style="left:2467px;top:362px;width:164px;height:50px;background:#0a0a0a;border-radius:11px;"></div>
<svg class="b" style="left:2484.5px;top:378.5px;" width="22" height="18" viewBox="0 0 22 18"><g fill="none" stroke="#fff" stroke-width="1.7" stroke-linecap="round" stroke-linejoin="round"><path d="M7 1.6 H21 M7 9 H21 M7 16.4 H21"/><path d="M1.4 1.6 h0.4 M1.4 9 h0.4 M1.4 16.4 h0.4"/></g></svg>
<span class="t mw" style="left:2521px;top:373.0px;font-size:22.5px;line-height:29px;color:#fff;font-weight:500;letter-spacing:0.29px;transform:scaleX(1.050);transform-origin:0 50%;">Create</span>
<svg class="b" style="left:2606.0px;top:383.75px;" width="15" height="8.5" viewBox="0 0 15 8.5"><path d="M1.2 0.8 H13.8 L7.5 7.9 Z" fill="#fff" stroke="#fff" stroke-width="1.2" stroke-linejoin="round"/></svg>
<div class="b" style="left:2658px;top:362px;width:54px;height:54px;background:#fff;border:1.5px solid #0a0a0a;border-radius:50%;"></div>
<svg class="b" style="left:2670px;top:375px;" width="30" height="26" viewBox="0 0 30 26"><g fill="none" stroke="#0a0a0a" stroke-width="2" stroke-linejoin="round"><rect x="1.4" y="1.6" width="4.6" height="4.6" rx="1"/><rect x="1.4" y="10.6" width="4.6" height="4.6" rx="1"/><rect x="1.4" y="19.6" width="4.6" height="4.6" rx="1"/><path d="M10.6 4 H28.6 M10.6 13 H28.6 M10.6 22 H28.6" stroke-linecap="round"/></g></svg>
<div class="b" style="left:2721px;top:362px;width:54px;height:54px;background:#fff;border:1.5px solid #0a0a0a;border-radius:50%;"></div>
<svg class="b" style="left:2734.5px;top:375.5px;" width="27" height="27" viewBox="0 0 27 27"><g fill="none" stroke="#0a0a0a" stroke-width="2.2"><rect x="1.6" y="1.6" width="9.4" height="9.4" rx="2.2"/><rect x="16" y="1.6" width="9.4" height="9.4" rx="2.2"/><rect x="1.6" y="16" width="9.4" height="9.4" rx="2.2"/><rect x="16" y="16" width="9.4" height="9.4" rx="2.2"/></g></svg>
<div class="b" style="left:471.2px;top:499px;width:27px;height:27px;background:#fff;border:2px solid #767676;border-radius:5.5px;"></div>
<svg class="b" style="left:622.1px;top:505.4px;" width="11.4" height="16.4" viewBox="0 0 11.4 16.4"><path d="M5.7 1 L10.4 6.6 H1 Z M5.7 15.4 L10.4 9.8 H1 Z" fill="#0b0b0b" stroke="#0b0b0b" stroke-width="1.1" stroke-linejoin="round"/></svg><span class="t m" style="left:643.7px;top:496.9px;font-size:22px;line-height:29px;color:#3d4657;font-weight:500;letter-spacing:0.12px;transform:scaleX(1.018);transform-origin:0 50%;">Lead</span>
<svg class="b" style="left:712.1px;top:505.4px;" width="11.4" height="16.4" viewBox="0 0 11.4 16.4"><path d="M5.7 1 L10.4 6.6 H1 Z M5.7 15.4 L10.4 9.8 H1 Z" fill="#0b0b0b" stroke="#0b0b0b" stroke-width="1.1" stroke-linejoin="round"/></svg><span class="t m" style="left:733.5px;top:496.9px;font-size:22px;line-height:29px;color:#3d4657;font-weight:500;letter-spacing:0.20px;transform:scaleX(1.033);transform-origin:0 50%;">Hot</span>
<svg class="b" style="left:807.1px;top:505.4px;" width="11.4" height="16.4" viewBox="0 0 11.4 16.4"><path d="M5.7 1 L10.4 6.6 H1 Z M5.7 15.4 L10.4 9.8 H1 Z" fill="#0b0b0b" stroke="#0b0b0b" stroke-width="1.1" stroke-linejoin="round"/></svg><span class="t m" style="left:829px;top:496.9px;font-size:22px;line-height:29px;color:#3d4657;font-weight:500;letter-spacing:0.25px;transform:scaleX(1.045);transform-origin:0 50%;">First Name</span>
<svg class="b" style="left:979.6px;top:505.4px;" width="11.4" height="16.4" viewBox="0 0 11.4 16.4"><path d="M5.7 1 L10.4 6.6 H1 Z M5.7 15.4 L10.4 9.8 H1 Z" fill="#0b0b0b" stroke="#0b0b0b" stroke-width="1.1" stroke-linejoin="round"/></svg><span class="t m" style="left:1000.8px;top:480.4px;font-size:22px;line-height:29px;color:#3d4657;font-weight:500;letter-spacing:0.09px;transform:scaleX(1.016);transform-origin:0 50%;">Last</span><span class="t m" style="left:1000.8px;top:513.4px;font-size:22px;line-height:29px;color:#3d4657;font-weight:500;letter-spacing:0.49px;transform:scaleX(1.067);transform-origin:0 50%;">Name</span>
<svg class="b" style="left:1126.6px;top:505.4px;" width="11.4" height="16.4" viewBox="0 0 11.4 16.4"><path d="M5.7 1 L10.4 6.6 H1 Z M5.7 15.4 L10.4 9.8 H1 Z" fill="#0b0b0b" stroke="#0b0b0b" stroke-width="1.1" stroke-linejoin="round"/></svg><span class="t m" style="left:1148.6px;top:496.9px;font-size:22px;line-height:29px;color:#3d4657;font-weight:500;letter-spacing:0.32px;transform:scaleX(1.059);transform-origin:0 50%;">Email Address</span>
<svg class="b" style="left:1595.1px;top:505.4px;" width="11.4" height="16.4" viewBox="0 0 11.4 16.4"><path d="M5.7 1 L10.4 6.6 H1 Z M5.7 15.4 L10.4 9.8 H1 Z" fill="#0b0b0b" stroke="#0b0b0b" stroke-width="1.1" stroke-linejoin="round"/></svg><span class="t m" style="left:1616px;top:480.4px;font-size:22px;line-height:29px;color:#3d4657;font-weight:500;letter-spacing:0.38px;transform:scaleX(1.069);transform-origin:0 50%;">Mobile</span><span class="t m" style="left:1616px;top:513.4px;font-size:22px;line-height:29px;color:#3d4657;font-weight:500;letter-spacing:0.50px;transform:scaleX(1.083);transform-origin:0 50%;">phone</span>
<svg class="b" style="left:1738.6px;top:505.4px;" width="11.4" height="16.4" viewBox="0 0 11.4 16.4"><path d="M5.7 1 L10.4 6.6 H1 Z M5.7 15.4 L10.4 9.8 H1 Z" fill="#0b0b0b" stroke="#0b0b0b" stroke-width="1.1" stroke-linejoin="round"/></svg><span class="t m" style="left:1761px;top:480.4px;font-size:22px;line-height:29px;color:#3d4657;font-weight:500;letter-spacing:0.21px;transform:scaleX(1.032);transform-origin:0 50%;">Lead</span><span class="t m" style="left:1761px;top:513.4px;font-size:22px;line-height:29px;color:#3d4657;font-weight:500;letter-spacing:0.27px;transform:scaleX(1.045);transform-origin:0 50%;">Source</span>
<span class="t m" style="left:1881.6px;top:496.9px;font-size:22px;line-height:29px;color:#3d4657;font-weight:500;letter-spacing:0.30px;transform:scaleX(1.051);transform-origin:0 50%;">Request Type</span>
<svg class="b" style="left:2062.6px;top:505.4px;" width="11.4" height="16.4" viewBox="0 0 11.4 16.4"><path d="M5.7 1 L10.4 6.6 H1 Z M5.7 15.4 L10.4 9.8 H1 Z" fill="#0b0b0b" stroke="#0b0b0b" stroke-width="1.1" stroke-linejoin="round"/></svg><span class="t m" style="left:2085px;top:480.4px;font-size:22px;line-height:29px;color:#3d4657;font-weight:500;letter-spacing:0.53px;transform:scaleX(1.101);transform-origin:0 50%;">Contact</span><span class="t m" style="left:2085px;top:513.4px;font-size:22px;line-height:29px;color:#3d4657;font-weight:500;letter-spacing:0.24px;transform:scaleX(1.040);transform-origin:0 50%;">Source</span>
<svg class="b" style="left:2194.1px;top:505.4px;" width="11.4" height="16.4" viewBox="0 0 11.4 16.4"><path d="M5.7 1 L10.4 6.6 H1 Z M5.7 15.4 L10.4 9.8 H1 Z" fill="#0b0b0b" stroke="#0b0b0b" stroke-width="1.1" stroke-linejoin="round"/></svg><span class="t m" style="left:2215.6px;top:496.9px;font-size:22px;line-height:29px;color:#3d4657;font-weight:500;letter-spacing:0.42px;transform:scaleX(1.076);transform-origin:0 50%;">Created</span>
<svg class="b" style="left:2350.1px;top:505.4px;" width="11.4" height="16.4" viewBox="0 0 11.4 16.4"><path d="M5.7 1 L10.4 6.6 H1 Z M5.7 15.4 L10.4 9.8 H1 Z" fill="#0b0b0b" stroke="#0b0b0b" stroke-width="1.1" stroke-linejoin="round"/></svg><span class="t m" style="left:2372.5px;top:480.4px;font-size:22px;line-height:29px;color:#3d4657;font-weight:500;letter-spacing:0.33px;transform:scaleX(1.066);transform-origin:0 50%;">Active</span><span class="t m" style="left:2372.5px;top:513.4px;font-size:22px;line-height:29px;color:#3d4657;font-weight:500;letter-spacing:0.41px;transform:scaleX(1.077);transform-origin:0 50%;">Marketing</span>
<svg class="b" style="left:2521.1px;top:505.4px;" width="11.4" height="16.4" viewBox="0 0 11.4 16.4"><path d="M5.7 1 L10.4 6.6 H1 Z M5.7 15.4 L10.4 9.8 H1 Z" fill="#0b0b0b" stroke="#0b0b0b" stroke-width="1.1" stroke-linejoin="round"/></svg><span class="t m" style="left:2543px;top:496.9px;font-size:22px;line-height:29px;color:#3d4657;font-weight:500;letter-spacing:0.26px;transform:scaleX(1.047);transform-origin:0 50%;">Lead Status</span>
<div class="b" style="left:0;top:562px;width:2870px;height:756.4px;overflow:hidden;">
<div class="b" style="left:0;top:-562px;width:2870px;height:1360px;">
<div class="b" style="left:449px;top:530px;width:2373px;height:39.8px;background:#fff;border-radius:11px;box-shadow:0 3px 0 0 #e9ebf2;"></div>
<div class="b" style="left:449px;top:572.8px;width:2373px;height:90px;background:#fff;border-radius:11px;box-shadow:0 3px 0 0 #e9ebf2;"></div>
<div class="b" style="left:471.2px;top:602.5999999999999px;width:27px;height:27px;background:#fff;border:2px solid #767676;border-radius:5.5px;"></div>
<svg class="b" style="left:522.86px;top:598.3px;" width="31.6" height="31.6" viewBox="0 0 30 30"><path d="M12.6 5.5 H7.2 a4 4 0 0 0 -4 4 V22.8 a4 4 0 0 0 4 4 H20.6 a4 4 0 0 0 4 -4 V17.6" fill="none" stroke="#0a0a0a" stroke-width="2.15" stroke-linecap="round"/><g transform="translate(0.6 -0.9)"><path d="M11.2 15.6 L22.8 3.9 a2.7 2.7 0 0 1 3.8 0 l0.3 0.3 a2.7 2.7 0 0 1 0 3.8 L15.3 19.7 L9.8 21.1 Z" fill="#fff" stroke="#0a0a0a" stroke-width="2.05" stroke-linejoin="round"/><path d="M20.5 6.3 L24.5 10.3" stroke="#0a0a0a" stroke-width="2" stroke-linecap="round"/></g></svg>
<svg class="b" style="left:574px;top:599.3499999999999px;" width="24.8" height="28.8" viewBox="0 0 24.8 28.8"><g fill="none" stroke="#ea6b68" stroke-width="1.9" stroke-linecap="round" stroke-linejoin="round"><path d="M1 4.2 H23.8"/><path d="M6.6 4 L8.2 1.8 Q8.7 1 9.6 1 H15.2 Q16.1 1 16.6 1.8 L18.2 4"/><path d="M2.7 4.4 L3.4 23.6 Q3.6 27.8 7.6 27.8 H17.2 Q21.2 27.8 21.4 23.6 L22.1 4.4"/><path d="M7.1 9.4 V22.8 M12.4 9.4 V22.8 M17.7 9.4 V22.8"/></g></svg>
<svg class="b" style="left:647px;top:588.1999999999999px;overflow:visible;" width="36" height="60" viewBox="0 0 36 60"><defs><linearGradient id="fg" x1="0" y1="0" x2="1" y2="0"><stop offset="0" stop-color="#a6a6a6"/><stop offset="0.3" stop-color="#c6c6c6"/><stop offset="0.62" stop-color="#a2a2a2"/><stop offset="1" stop-color="#7c7c7c"/></linearGradient><linearGradient id="fe" x1="0" y1="0" x2="1" y2="0"><stop offset="0" stop-color="#9c9c9c"/><stop offset="0.5" stop-color="#858585"/><stop offset="1" stop-color="#9a9a9a"/></linearGradient></defs><g filter="url(#blur1)"><path d="M7.6 0.8 Q18.5 4.2 21.8 15.4 L26.8 16.2 L18 24.6 L8.4 16.2 L13.8 15.6 Q13.6 7.4 7.6 0.8 Z" fill="#3567b7"/><path d="M1 30.4 L15.3 47.8 L15.9 58.4 L20.8 51.4 L21 46.8 L34.2 30.4 Z" fill="url(#fg)"/><ellipse cx="17.6" cy="30.2" rx="16.6" ry="3.3" fill="url(#fe)"/></g></svg>
<div class="b" style="left:717.4px;top:582.1999999999999px;width:71.4px;height:71.4px;border-radius:50%;background:#fff;border:3.2px solid #c8c8c8;"></div>
<div class="b" style="left:721.7px;top:586.5px;width:62.6px;height:62.6px;border-radius:50%;background:#4a6958;"></div>
<span class="t" style="left:718px;top:603.4px;font-size:21.3px;line-height:28px;color:#fff;width:70px;text-align:center;letter-spacing:0.3px;">TM</span>
<div class="b" style="left:764.2px;top:634.6999999999999px;width:15.2px;height:15.2px;border-radius:50%;background:#e8291f;"></div>
<svg class="b" style="left:813px;top:608.5999999999999px;" width="20" height="20" viewBox="0 0 20 20"><g fill="none" stroke="#111" stroke-width="2.1" stroke-linecap="round" stroke-linejoin="round"><path d="M8.5 4.2 H4.4 a2 2 0 0 0 -2 2 V15.6 a2 2 0 0 0 2 2 H13.8 a2 2 0 0 0 2 -2 V11.5"/><path d="M12 1.8 H18.2 V8 M18 2 L9.4 10.6"/></g></svg>
<span class="t" style="left:838px;top:602.0px;font-size:22.8px;line-height:30px;color:#38414f;font-weight:700;letter-spacing:0.22px;transform:scaleX(1.032);transform-origin:0 50%;">thurman</span>
<span class="t" style="left:986px;top:602.0px;font-size:22.8px;line-height:30px;color:#38414f;font-weight:700;letter-spacing:0.33px;transform:scaleX(1.043);transform-origin:0 50%;">murman</span>
<span class="t lnk" style="left:1134px;top:602.0px;font-size:22.8px;line-height:30px;color:#2f71e0;letter-spacing:0.30px;transform:scaleX(1.050);transform-origin:0 50%;">253quailst@gmail.com</span>
<span class="t lnk" style="left:1602px;top:602.0px;font-size:22.8px;line-height:30px;color:#2f71e0;">5<span style="margin:0 -0.085em">1</span>8788<span style="margin:0 -0.085em">1</span>635</span>
<span class="t" style="left:1747px;top:586.2px;font-size:22.8px;line-height:30px;color:#3d4657;letter-spacing:0.43px;transform:scaleX(1.060);transform-origin:0 50%;">Company</span><span class="t" style="left:1747px;top:619.3px;font-size:22.8px;line-height:30px;color:#3d4657;letter-spacing:0.18px;transform:scaleX(1.030);transform-origin:0 50%;">Website</span>
<div class="b" style="left:1872px;top:594.9px;width:180px;height:36.8px;background:#b94c3e;border-radius:10px;"></div>
<span class="t mw" style="left:1883.7px;top:600.2px;font-size:20px;line-height:26px;color:#fff;font-weight:500;letter-spacing:0.03px;transform:scaleX(1.005);transform-origin:0 50%;">New Registrati…</span>
<span class="t" style="left:2201px;top:586.2px;font-size:22.8px;line-height:30px;color:#3d4657;letter-spacing:0.24px;transform:scaleX(1.045);transform-origin:0 50%;">8/7/2024,</span><span class="t" style="left:2201px;top:619.3px;font-size:22.8px;line-height:30px;color:#3d4657;letter-spacing:-0.19px;transform:scaleX(0.972);transform-origin:0 50%;">6:46 PM</span>
<svg class="b" style="left:2401.5px;top:605.5999999999999px;" width="30.5" height="26" viewBox="0 0 30.5 26"><g fill="none" stroke="#0a0a0a" stroke-width="2" stroke-linecap="round" stroke-linejoin="round"><path d="M6.8 1.9 H11.1 M19.4 1.9 H23.7"/><path d="M6.4 5.9 H10.4 Q12.1 5.9 12.1 7.6 V22.6 Q12.1 24.7 10 24.7 H4.2 Q1.9 24.7 1.9 22.2 Q1.9 18.5 3.4 15 Q5 11.5 5.2 8 Q5.3 5.9 6.4 5.9 Z"/><path d="M24.1 5.9 H20.1 Q18.4 5.9 18.4 7.6 V22.6 Q18.4 24.7 20.5 24.7 H26.3 Q28.6 24.7 28.6 22.2 Q28.6 18.5 27.1 15 Q25.5 11.5 25.3 8 Q25.2 5.9 24.1 5.9 Z"/><path d="M12.1 7.6 H18.4 M12.1 14.3 H18.4"/></g></svg>
<svg class="b" style="left:2456.4px;top:608.1999999999999px;" width="28.6" height="22" viewBox="0 0 28.6 22"><g fill="none" stroke="#0a0a0a" stroke-width="2.1" stroke-linecap="round" stroke-linejoin="round"><rect x="1.1" y="1.1" width="26.4" height="19.8" rx="3.6"/><path d="M1.7 6.4 L12.6 14.5 Q14.3 15.7 16 14.5 L26.9 6.4"/></g></svg>
<div class="b" style="left:2528px;top:591.0px;width:198px;height:53.4px;background:#f8f8f9;border:1.5px solid #ececf0;border-radius:11px;"></div>
<span class="t" style="left:2543px;top:602.2px;font-size:22.8px;line-height:30px;color:#555;letter-spacing:0.14px;transform:scaleX(1.022);transform-origin:0 50%;">Assigned</span>
<svg class="b" style="left:2696.0px;top:612.8499999999999px;" width="13" height="7.5" viewBox="0 0 13 7.5"><path d="M1.2 0.8 H11.8 L6.5 6.9 Z" fill="#222" stroke="#222" stroke-width="1.2" stroke-linejoin="round"/></svg>
<div class="b" style="left:449px;top:665.8px;width:2373px;height:121px;background:#fff;border-radius:11px;box-shadow:0 3px 0 0 #e9ebf2;"></div>
<div class="b" style="left:471.2px;top:710.7499999999999px;width:27px;height:27px;background:#fff;border:2px solid #767676;border-radius:5.5px;"></div>
<svg class="b" style="left:522.86px;top:706.4499999999999px;" width="31.6" height="31.6" viewBox="0 0 30 30"><path d="M12.6 5.5 H7.2 a4 4 0 0 0 -4 4 V22.8 a4 4 0 0 0 4 4 H20.6 a4 4 0 0 0 4 -4 V17.6" fill="none" stroke="#0a0a0a" stroke-width="2.15" stroke-linecap="round"/><g transform="translate(0.6 -0.9)"><path d="M11.2 15.6 L22.8 3.9 a2.7 2.7 0 0 1 3.8 0 l0.3 0.3 a2.7 2.7 0 0 1 0 3.8 L15.3 19.7 L9.8 21.1 Z" fill="#fff" stroke="#0a0a0a" stroke-width="2.05" stroke-linejoin="round"/><path d="M20.5 6.3 L24.5 10.3" stroke="#0a0a0a" stroke-width="2" stroke-linecap="round"/></g></svg>
<svg class="b" style="left:574px;top:707.4999999999999px;" width="24.8" height="28.8" viewBox="0 0 24.8 28.8"><g fill="none" stroke="#ea6b68" stroke-width="1.9" stroke-linecap="round" stroke-linejoin="round"><path d="M1 4.2 H23.8"/><path d="M6.6 4 L8.2 1.8 Q8.7 1 9.6 1 H15.2 Q16.1 1 16.6 1.8 L18.2 4"/><path d="M2.7 4.4 L3.4 23.6 Q3.6 27.8 7.6 27.8 H17.2 Q21.2 27.8 21.4 23.6 L22.1 4.4"/><path d="M7.1 9.4 V22.8 M12.4 9.4 V22.8 M17.7 9.4 V22.8"/></g></svg>
<svg class="b" style="left:647px;top:696.3499999999999px;overflow:visible;" width="36" height="60" viewBox="0 0 36 60"><defs><linearGradient id="fg" x1="0" y1="0" x2="1" y2="0"><stop offset="0" stop-color="#a6a6a6"/><stop offset="0.3" stop-color="#c6c6c6"/><stop offset="0.62" stop-color="#a2a2a2"/><stop offset="1" stop-color="#7c7c7c"/></linearGradient><linearGradient id="fe" x1="0" y1="0" x2="1" y2="0"><stop offset="0" stop-color="#9c9c9c"/><stop offset="0.5" stop-color="#858585"/><stop offset="1" stop-color="#9a9a9a"/></linearGradient></defs><g filter="url(#blur1)"><path d="M7.6 0.8 Q18.5 4.2 21.8 15.4 L26.8 16.2 L18 24.6 L8.4 16.2 L13.8 15.6 Q13.6 7.4 7.6 0.8 Z" fill="#3567b7"/><path d="M1 30.4 L15.3 47.8 L15.9 58.4 L20.8 51.4 L21 46.8 L34.2 30.4 Z" fill="url(#fg)"/><ellipse cx="17.6" cy="30.2" rx="16.6" ry="3.3" fill="url(#fe)"/></g></svg>
<div class="b" style="left:717.4px;top:690.3499999999999px;width:71.4px;height:71.4px;border-radius:50%;background:#fff;border:3.2px solid #c8c8c8;"></div>
<div class="b" style="left:721.7px;top:694.65px;width:62.6px;height:62.6px;border-radius:50%;background:#e03db8;"></div>
<span class="t" style="left:718px;top:711.5px;font-size:21.3px;line-height:28px;color:#fff;width:70px;text-align:center;letter-spacing:0.3px;">LT</span>
<div class="b" style="left:764.2px;top:742.8499999999999px;width:15.2px;height:15.2px;border-radius:50%;background:#e8291f;"></div>
<svg class="b" style="left:813px;top:716.7499999999999px;" width="20" height="20" viewBox="0 0 20 20"><g fill="none" stroke="#111" stroke-width="2.1" stroke-linecap="round" stroke-linejoin="round"><path d="M8.5 4.2 H4.4 a2 2 0 0 0 -2 2 V15.6 a2 2 0 0 0 2 2 H13.8 a2 2 0 0 0 2 -2 V11.5"/><path d="M12 1.8 H18.2 V8 M18 2 L9.4 10.6"/></g></svg>
<span class="t" style="left:838px;top:710.1px;font-size:22.8px;line-height:30px;color:#38414f;font-weight:700;letter-spacing:0.07px;transform:scaleX(1.011);transform-origin:0 50%;">leah</span>
<span class="t" style="left:986px;top:677.8px;font-size:22.8px;line-height:30px;color:#38414f;font-weight:700;letter-spacing:0.08px;transform:scaleX(1.014);transform-origin:0 50%;">tourt</span><span class="t" style="left:986px;top:710.9px;font-size:22.8px;line-height:30px;color:#38414f;font-weight:700;letter-spacing:0.30px;transform:scaleX(1.047);transform-origin:0 50%;">(agency</span><span class="t" style="left:986px;top:744.0px;font-size:22.8px;line-height:30px;color:#38414f;font-weight:700;letter-spacing:0.28px;transform:scaleX(1.051);transform-origin:0 50%;">acct)</span>
<span class="t lnk" style="left:1134px;top:710.1px;font-size:22.8px;line-height:30px;color:#2f71e0;letter-spacing:0.30px;transform:scaleX(1.052);transform-origin:0 50%;">leah.tourt@theagencyre.com</span>
<span class="t lnk" style="left:1602px;top:710.1px;font-size:22.8px;line-height:30px;color:#2f71e0;">5<span style="margin:0 -0.085em">1</span>8788<span style="margin:0 -0.085em">1</span>635</span>
<span class="t" style="left:1747px;top:694.4px;font-size:22.8px;line-height:30px;color:#3d4657;letter-spacing:0.43px;transform:scaleX(1.060);transform-origin:0 50%;">Company</span><span class="t" style="left:1747px;top:727.5px;font-size:22.8px;line-height:30px;color:#3d4657;letter-spacing:0.18px;transform:scaleX(1.030);transform-origin:0 50%;">Website</span>
<div class="b" style="left:1872px;top:703.05px;width:131px;height:36.8px;background:#5bacd9;border-radius:10px;"></div>
<span class="t mw" style="left:1883.7px;top:708.3px;font-size:20px;line-height:26px;color:#fff;font-weight:500;letter-spacing:0.30px;transform:scaleX(1.060);transform-origin:0 50%;">Contact Us</span>
<span class="t" style="left:2201px;top:694.4px;font-size:22.8px;line-height:30px;color:#3d4657;letter-spacing:0.20px;transform:scaleX(1.036);transform-origin:0 50%;">7/26/2024,</span><span class="t" style="left:2201px;top:727.5px;font-size:22.8px;line-height:30px;color:#3d4657;letter-spacing:-1.15px;transform:scaleX(0.930);transform-origin:0 50%;"><span style="margin:0 -0.085em">1</span>:<span style="margin:0 -0.085em">1</span><span style="margin:0 -0.085em">1</span> PM</span>
<svg class="b" style="left:2401.5px;top:713.7499999999999px;" width="30.5" height="26" viewBox="0 0 30.5 26"><g fill="none" stroke="#0a0a0a" stroke-width="2" stroke-linecap="round" stroke-linejoin="round"><path d="M6.8 1.9 H11.1 M19.4 1.9 H23.7"/><path d="M6.4 5.9 H10.4 Q12.1 5.9 12.1 7.6 V22.6 Q12.1 24.7 10 24.7 H4.2 Q1.9 24.7 1.9 22.2 Q1.9 18.5 3.4 15 Q5 11.5 5.2 8 Q5.3 5.9 6.4 5.9 Z"/><path d="M24.1 5.9 H20.1 Q18.4 5.9 18.4 7.6 V22.6 Q18.4 24.7 20.5 24.7 H26.3 Q28.6 24.7 28.6 22.2 Q28.6 18.5 27.1 15 Q25.5 11.5 25.3 8 Q25.2 5.9 24.1 5.9 Z"/><path d="M12.1 7.6 H18.4 M12.1 14.3 H18.4"/></g></svg>
<svg class="b" style="left:2456.4px;top:716.3499999999999px;" width="28.6" height="22" viewBox="0 0 28.6 22"><g fill="none" stroke="#0a0a0a" stroke-width="2.1" stroke-linecap="round" stroke-linejoin="round"><rect x="1.1" y="1.1" width="26.4" height="19.8" rx="3.6"/><path d="M1.7 6.4 L12.6 14.5 Q14.3 15.7 16 14.5 L26.9 6.4"/></g></svg>
<div class="b" style="left:2528px;top:699.15px;width:198px;height:53.4px;background:#f8f8f9;border:1.5px solid #ececf0;border-radius:11px;"></div>
<span class="t" style="left:2543px;top:710.3px;font-size:22.8px;line-height:30px;color:#555;letter-spacing:0.14px;transform:scaleX(1.022);transform-origin:0 50%;">Assigned</span>
<svg class="b" style="left:2696.0px;top:720.9999999999999px;" width="13" height="7.5" viewBox="0 0 13 7.5"><path d="M1.2 0.8 H11.8 L6.5 6.9 Z" fill="#222" stroke="#222" stroke-width="1.2" stroke-linejoin="round"/></svg>
<div class="b" style="left:449px;top:790px;width:2373px;height:90px;background:#fff;border-radius:11px;box-shadow:0 3px 0 0 #e9ebf2;"></div>
<div class="b" style="left:471.2px;top:819.0999999999999px;width:27px;height:27px;background:#050505;border-radius:5px;"></div>
<svg class="b" style="left:471.2px;top:819.0999999999999px;" width="27" height="27" viewBox="0 0 27 27"><path d="M5.8 13.9 L10.9 19.6 L21.3 6.3" fill="none" stroke="#fff" stroke-width="4" stroke-linejoin="miter"/></svg>
<svg class="b" style="left:522.86px;top:814.8px;" width="31.6" height="31.6" viewBox="0 0 30 30"><path d="M12.6 5.5 H7.2 a4 4 0 0 0 -4 4 V22.8 a4 4 0 0 0 4 4 H20.6 a4 4 0 0 0 4 -4 V17.6" fill="none" stroke="#0a0a0a" stroke-width="2.15" stroke-linecap="round"/><g transform="translate(0.6 -0.9)"><path d="M11.2 15.6 L22.8 3.9 a2.7 2.7 0 0 1 3.8 0 l0.3 0.3 a2.7 2.7 0 0 1 0 3.8 L15.3 19.7 L9.8 21.1 Z" fill="#fff" stroke="#0a0a0a" stroke-width="2.05" stroke-linejoin="round"/><path d="M20.5 6.3 L24.5 10.3" stroke="#0a0a0a" stroke-width="2" stroke-linecap="round"/></g></svg>
<svg class="b" style="left:574px;top:815.8499999999999px;" width="24.8" height="28.8" viewBox="0 0 24.8 28.8"><g fill="none" stroke="#ea6b68" stroke-width="1.9" stroke-linecap="round" stroke-linejoin="round"><path d="M1 4.2 H23.8"/><path d="M6.6 4 L8.2 1.8 Q8.7 1 9.6 1 H15.2 Q16.1 1 16.6 1.8 L18.2 4"/><path d="M2.7 4.4 L3.4 23.6 Q3.6 27.8 7.6 27.8 H17.2 Q21.2 27.8 21.4 23.6 L22.1 4.4"/><path d="M7.1 9.4 V22.8 M12.4 9.4 V22.8 M17.7 9.4 V22.8"/></g></svg>
<div class="b" style="left:717.4px;top:798.6999999999999px;width:71.4px;height:71.4px;border-radius:50%;background:#fff;border:3.2px solid #c8c8c8;"></div>
<div class="b" style="left:721.7px;top:803.0px;width:62.6px;height:62.6px;border-radius:50%;background:#4a82d4;"></div>
<span class="t" style="left:718px;top:819.9px;font-size:21.3px;line-height:28px;color:#fff;width:70px;text-align:center;letter-spacing:0.3px;">TB</span>
<svg class="b" style="left:813px;top:825.0999999999999px;" width="20" height="20" viewBox="0 0 20 20"><g fill="none" stroke="#111" stroke-width="2.1" stroke-linecap="round" stroke-linejoin="round"><path d="M8.5 4.2 H4.4 a2 2 0 0 0 -2 2 V15.6 a2 2 0 0 0 2 2 H13.8 a2 2 0 0 0 2 -2 V11.5"/><path d="M12 1.8 H18.2 V8 M18 2 L9.4 10.6"/></g></svg>
<span class="t" style="left:838px;top:818.5px;font-size:22.8px;line-height:30px;color:#38414f;font-weight:700;letter-spacing:0.02px;transform:scaleX(1.004);transform-origin:0 50%;">travis</span>
<span class="t" style="left:986px;top:818.5px;font-size:22.8px;line-height:30px;color:#38414f;font-weight:700;letter-spacing:0.11px;transform:scaleX(1.017);transform-origin:0 50%;">barkley</span>
<span class="t lnk" style="left:1602px;top:802.8px;font-size:22.8px;line-height:30px;color:#2f71e0;letter-spacing:0.40px;transform:scaleX(1.069);transform-origin:0 50%;">555-222-</span><span class="t lnk" style="left:1602px;top:835.8px;font-size:22.8px;line-height:30px;color:#2f71e0;letter-spacing:-0.13px;transform:scaleX(0.982);transform-origin:0 50%;">2222</span>
<span class="t" style="left:1747px;top:802.8px;font-size:22.8px;line-height:30px;color:#3d4657;letter-spacing:-0.25px;transform:scaleX(0.952);transform-origin:0 50%;">File</span><span class="t" style="left:1747px;top:835.8px;font-size:22.8px;line-height:30px;color:#3d4657;letter-spacing:0.37px;transform:scaleX(1.067);transform-origin:0 50%;">Import</span>
<span class="t" style="left:2201px;top:802.8px;font-size:22.8px;line-height:30px;color:#3d4657;letter-spacing:0.21px;transform:scaleX(1.038);transform-origin:0 50%;">7/24/2024,</span><span class="t" style="left:2201px;top:835.8px;font-size:22.8px;line-height:30px;color:#3d4657;letter-spacing:-0.37px;transform:scaleX(0.944);transform-origin:0 50%;"><span style="margin:0 -0.085em">1</span>2:28 PM</span>
<svg class="b" style="left:2402.6px;top:824.6999999999999px;" width="28.6" height="22" viewBox="0 0 28.6 22"><g fill="none" stroke="#0a0a0a" stroke-width="2.1" stroke-linecap="round" stroke-linejoin="round"><rect x="1.1" y="1.1" width="26.4" height="19.8" rx="3.6"/><path d="M1.7 6.4 L12.6 14.5 Q14.3 15.7 16 14.5 L26.9 6.4"/></g></svg>
<div class="b" style="left:449px;top:883px;width:2373px;height:90px;background:#fff;border-radius:11px;box-shadow:0 3px 0 0 #e9ebf2;"></div>
<div class="b" style="left:471.2px;top:912.0999999999999px;width:27px;height:27px;background:#050505;border-radius:5px;"></div>
<svg class="b" style="left:471.2px;top:912.0999999999999px;" width="27" height="27" viewBox="0 0 27 27"><path d="M5.8 13.9 L10.9 19.6 L21.3 6.3" fill="none" stroke="#fff" stroke-width="4" stroke-linejoin="miter"/></svg>
<svg class="b" style="left:522.86px;top:907.8px;" width="31.6" height="31.6" viewBox="0 0 30 30"><path d="M12.6 5.5 H7.2 a4 4 0 0 0 -4 4 V22.8 a4 4 0 0 0 4 4 H20.6 a4 4 0 0 0 4 -4 V17.6" fill="none" stroke="#0a0a0a" stroke-width="2.15" stroke-linecap="round"/><g transform="translate(0.6 -0.9)"><path d="M11.2 15.6 L22.8 3.9 a2.7 2.7 0 0 1 3.8 0 l0.3 0.3 a2.7 2.7 0 0 1 0 3.8 L15.3 19.7 L9.8 21.1 Z" fill="#fff" stroke="#0a0a0a" stroke-width="2.05" stroke-linejoin="round"/><path d="M20.5 6.3 L24.5 10.3" stroke="#0a0a0a" stroke-width="2" stroke-linecap="round"/></g></svg>
<svg class="b" style="left:574px;top:908.8499999999999px;" width="24.8" height="28.8" viewBox="0 0 24.8 28.8"><g fill="none" stroke="#ea6b68" stroke-width="1.9" stroke-linecap="round" stroke-linejoin="round"><path d="M1 4.2 H23.8"/><path d="M6.6 4 L8.2 1.8 Q8.7 1 9.6 1 H15.2 Q16.1 1 16.6 1.8 L18.2 4"/><path d="M2.7 4.4 L3.4 23.6 Q3.6 27.8 7.6 27.8 H17.2 Q21.2 27.8 21.4 23.6 L22.1 4.4"/><path d="M7.1 9.4 V22.8 M12.4 9.4 V22.8 M17.7 9.4 V22.8"/></g></svg>
<div class="b" style="left:717.4px;top:891.6999999999999px;width:71.4px;height:71.4px;border-radius:50%;background:#fff;border:3.2px solid #c8c8c8;"></div>
<div class="b" style="left:721.7px;top:896.0px;width:62.6px;height:62.6px;border-radius:50%;background:#e8346c;"></div>
<span class="t" style="left:718px;top:912.9px;font-size:21.3px;line-height:28px;color:#fff;width:70px;text-align:center;letter-spacing:0.3px;">JK</span>
<svg class="b" style="left:813px;top:918.0999999999999px;" width="20" height="20" viewBox="0 0 20 20"><g fill="none" stroke="#111" stroke-width="2.1" stroke-linecap="round" stroke-linejoin="round"><path d="M8.5 4.2 H4.4 a2 2 0 0 0 -2 2 V15.6 a2 2 0 0 0 2 2 H13.8 a2 2 0 0 0 2 -2 V11.5"/><path d="M12 1.8 H18.2 V8 M18 2 L9.4 10.6"/></g></svg>
<span class="t" style="left:838px;top:911.5px;font-size:22.8px;line-height:30px;color:#38414f;font-weight:700;">jason</span>
<span class="t" style="left:986px;top:911.5px;font-size:22.8px;line-height:30px;color:#38414f;font-weight:700;letter-spacing:0.04px;transform:scaleX(1.007);transform-origin:0 50%;">kelce</span>
<span class="t lnk" style="left:1134px;top:911.5px;font-size:22.8px;line-height:30px;color:#2f71e0;letter-spacing:0.27px;transform:scaleX(1.047);transform-origin:0 50%;">jasonkelce@gmail.com.invalid</span>
<span class="t lnk" style="left:1602px;top:895.8px;font-size:22.8px;line-height:30px;color:#2f71e0;letter-spacing:0.55px;transform:scaleX(1.098);transform-origin:0 50%;">555-555-</span><span class="t lnk" style="left:1602px;top:928.8px;font-size:22.8px;line-height:30px;color:#2f71e0;letter-spacing:0.28px;transform:scaleX(1.042);transform-origin:0 50%;">5555</span>
<span class="t" style="left:1747px;top:895.8px;font-size:22.8px;line-height:30px;color:#3d4657;letter-spacing:-0.25px;transform:scaleX(0.952);transform-origin:0 50%;">File</span><span class="t" style="left:1747px;top:928.8px;font-size:22.8px;line-height:30px;color:#3d4657;letter-spacing:0.37px;transform:scaleX(1.067);transform-origin:0 50%;">Import</span>
<span class="t" style="left:2201px;top:895.8px;font-size:22.8px;line-height:30px;color:#3d4657;letter-spacing:0.21px;transform:scaleX(1.038);transform-origin:0 50%;">7/24/2024,</span><span class="t" style="left:2201px;top:928.8px;font-size:22.8px;line-height:30px;color:#3d4657;letter-spacing:-0.52px;transform:scaleX(0.930);transform-origin:0 50%;"><span style="margin:0 -0.085em">1</span>2:<span style="margin:0 -0.085em">1</span>9 PM</span>
<svg class="b" style="left:2402.6px;top:917.6999999999999px;" width="28.6" height="22" viewBox="0 0 28.6 22"><g fill="none" stroke="#0a0a0a" stroke-width="2.1" stroke-linecap="round" stroke-linejoin="round"><rect x="1.1" y="1.1" width="26.4" height="19.8" rx="3.6"/><path d="M1.7 6.4 L12.6 14.5 Q14.3 15.7 16 14.5 L26.9 6.4"/></g></svg>
<div class="b" style="left:449px;top:976px;width:2373px;height:90px;background:#fff;border-radius:11px;box-shadow:0 3px 0 0 #e9ebf2;"></div>
<div class="b" style="left:471.2px;top:1005.0999999999999px;width:27px;height:27px;background:#050505;border-radius:5px;"></div>
<svg class="b" style="left:471.2px;top:1005.0999999999999px;" width="27" height="27" viewBox="0 0 27 27"><path d="M5.8 13.9 L10.9 19.6 L21.3 6.3" fill="none" stroke="#fff" stroke-width="4" stroke-linejoin="miter"/></svg>
<svg class="b" style="left:522.86px;top:1000.8px;" width="31.6" height="31.6" viewBox="0 0 30 30"><path d="M12.6 5.5 H7.2 a4 4 0 0 0 -4 4 V22.8 a4 4 0 0 0 4 4 H20.6 a4 4 0 0 0 4 -4 V17.6" fill="none" stroke="#0a0a0a" stroke-width="2.15" stroke-linecap="round"/><g transform="translate(0.6 -0.9)"><path d="M11.2 15.6 L22.8 3.9 a2.7 2.7 0 0 1 3.8 0 l0.3 0.3 a2.7 2.7 0 0 1 0 3.8 L15.3 19.7 L9.8 21.1 Z" fill="#fff" stroke="#0a0a0a" stroke-width="2.05" stroke-linejoin="round"/><path d="M20.5 6.3 L24.5 10.3" stroke="#0a0a0a" stroke-width="2" stroke-linecap="round"/></g></svg>
<svg class="b" style="left:574px;top:1001.8499999999999px;" width="24.8" height="28.8" viewBox="0 0 24.8 28.8"><g fill="none" stroke="#ea6b68" stroke-width="1.9" stroke-linecap="round" stroke-linejoin="round"><path d="M1 4.2 H23.8"/><path d="M6.6 4 L8.2 1.8 Q8.7 1 9.6 1 H15.2 Q16.1 1 16.6 1.8 L18.2 4"/><path d="M2.7 4.4 L3.4 23.6 Q3.6 27.8 7.6 27.8 H17.2 Q21.2 27.8 21.4 23.6 L22.1 4.4"/><path d="M7.1 9.4 V22.8 M12.4 9.4 V22.8 M17.7 9.4 V22.8"/></g></svg>
<svg class="b" style="left:647px;top:990.6999999999999px;overflow:visible;" width="36" height="60" viewBox="0 0 36 60"><defs><linearGradient id="fg" x1="0" y1="0" x2="1" y2="0"><stop offset="0" stop-color="#a6a6a6"/><stop offset="0.3" stop-color="#c6c6c6"/><stop offset="0.62" stop-color="#a2a2a2"/><stop offset="1" stop-color="#7c7c7c"/></linearGradient><linearGradient id="fe" x1="0" y1="0" x2="1" y2="0"><stop offset="0" stop-color="#9c9c9c"/><stop offset="0.5" stop-color="#858585"/><stop offset="1" stop-color="#9a9a9a"/></linearGradient></defs><g filter="url(#blur1)"><path d="M7.6 0.8 Q18.5 4.2 21.8 15.4 L26.8 16.2 L18 24.6 L8.4 16.2 L13.8 15.6 Q13.6 7.4 7.6 0.8 Z" fill="#3567b7"/><path d="M1 30.4 L15.3 47.8 L15.9 58.4 L20.8 51.4 L21 46.8 L34.2 30.4 Z" fill="url(#fg)"/><ellipse cx="17.6" cy="30.2" rx="16.6" ry="3.3" fill="url(#fe)"/></g></svg>
<div class="b" style="left:717.4px;top:984.6999999999999px;width:71.4px;height:71.4px;border-radius:50%;background:#fff;border:3.2px solid #c8c8c8;"></div>
<div class="b" style="left:721.7px;top:989.0px;width:62.6px;height:62.6px;border-radius:50%;background:#7d1560;"></div>
<span class="t" style="left:718px;top:1005.9px;font-size:21.3px;line-height:28px;color:#fff;width:70px;text-align:center;letter-spacing:0.3px;">D</span>
<svg class="b" style="left:813px;top:1011.0999999999999px;" width="20" height="20" viewBox="0 0 20 20"><g fill="none" stroke="#111" stroke-width="2.1" stroke-linecap="round" stroke-linejoin="round"><path d="M8.5 4.2 H4.4 a2 2 0 0 0 -2 2 V15.6 a2 2 0 0 0 2 2 H13.8 a2 2 0 0 0 2 -2 V11.5"/><path d="M12 1.8 H18.2 V8 M18 2 L9.4 10.6"/></g></svg>
<span class="t" style="left:838px;top:1004.5px;font-size:22.8px;line-height:30px;color:#38414f;font-weight:700;letter-spacing:0.17px;transform:scaleX(1.027);transform-origin:0 50%;">david</span>
<span class="t" style="left:986px;top:1004.5px;font-size:22.8px;line-height:30px;color:#38414f;font-weight:700;letter-spacing:0.05px;transform:scaleX(1.009);transform-origin:0 50%;">tester</span>
<span class="t lnk" style="left:1134px;top:1004.5px;font-size:22.8px;line-height:30px;color:#2f71e0;letter-spacing:0.35px;transform:scaleX(1.052);transform-origin:0 50%;">david@meee.com</span>
<span class="t" style="left:2070.6px;top:988.8px;font-size:22.8px;line-height:30px;color:#3d4657;letter-spacing:0.17px;transform:scaleX(1.027);transform-origin:0 50%;">Website</span><span class="t" style="left:2070.6px;top:1021.8px;font-size:22.8px;line-height:30px;color:#3d4657;letter-spacing:0.14px;transform:scaleX(1.022);transform-origin:0 50%;">Signup</span>
<span class="t" style="left:2201px;top:988.8px;font-size:22.8px;line-height:30px;color:#3d4657;letter-spacing:0.27px;transform:scaleX(1.050);transform-origin:0 50%;">6/25/2024,</span><span class="t" style="left:2201px;top:1021.8px;font-size:22.8px;line-height:30px;color:#3d4657;letter-spacing:-0.02px;transform:scaleX(0.997);transform-origin:0 50%;">6:56 AM</span>
<svg class="b" style="left:2402.6px;top:1010.6999999999999px;" width="28.6" height="22" viewBox="0 0 28.6 22"><g fill="none" stroke="#0a0a0a" stroke-width="2.1" stroke-linecap="round" stroke-linejoin="round"><rect x="1.1" y="1.1" width="26.4" height="19.8" rx="3.6"/><path d="M1.7 6.4 L12.6 14.5 Q14.3 15.7 16 14.5 L26.9 6.4"/></g></svg>
<div class="b" style="left:2528px;top:993.5px;width:198px;height:53.4px;background:#f8f8f9;border:1.5px solid #ececf0;border-radius:11px;"></div>
<span class="t" style="left:2543px;top:1004.7px;font-size:22.8px;line-height:30px;color:#555;letter-spacing:0.14px;transform:scaleX(1.022);transform-origin:0 50%;">Assigned</span>
<svg class="b" style="left:2696.0px;top:1015.3499999999999px;" width="13" height="7.5" viewBox="0 0 13 7.5"><path d="M1.2 0.8 H11.8 L6.5 6.9 Z" fill="#222" stroke="#222" stroke-width="1.2" stroke-linejoin="round"/></svg>
<div class="b" style="left:449px;top:1069px;width:2373px;height:90px;background:#fff;border-radius:11px;box-shadow:0 3px 0 0 #e9ebf2;"></div>
<div class="b" style="left:471.2px;top:1098.1px;width:27px;height:27px;background:#fff;border:2px solid #767676;border-radius:5.5px;"></div>
<svg class="b" style="left:522.86px;top:1093.8px;" width="31.6" height="31.6" viewBox="0 0 30 30"><path d="M12.6 5.5 H7.2 a4 4 0 0 0 -4 4 V22.8 a4 4 0 0 0 4 4 H20.6 a4 4 0 0 0 4 -4 V17.6" fill="none" stroke="#0a0a0a" stroke-width="2.15" stroke-linecap="round"/><g transform="translate(0.6 -0.9)"><path d="M11.2 15.6 L22.8 3.9 a2.7 2.7 0 0 1 3.8 0 l0.3 0.3 a2.7 2.7 0 0 1 0 3.8 L15.3 19.7 L9.8 21.1 Z" fill="#fff" stroke="#0a0a0a" stroke-width="2.05" stroke-linejoin="round"/><path d="M20.5 6.3 L24.5 10.3" stroke="#0a0a0a" stroke-width="2" stroke-linecap="round"/></g></svg>
<svg class="b" style="left:574px;top:1094.85px;" width="24.8" height="28.8" viewBox="0 0 24.8 28.8"><g fill="none" stroke="#ea6b68" stroke-width="1.9" stroke-linecap="round" stroke-linejoin="round"><path d="M1 4.2 H23.8"/><path d="M6.6 4 L8.2 1.8 Q8.7 1 9.6 1 H15.2 Q16.1 1 16.6 1.8 L18.2 4"/><path d="M2.7 4.4 L3.4 23.6 Q3.6 27.8 7.6 27.8 H17.2 Q21.2 27.8 21.4 23.6 L22.1 4.4"/><path d="M7.1 9.4 V22.8 M12.4 9.4 V22.8 M17.7 9.4 V22.8"/></g></svg>
<svg class="b" style="left:647px;top:1083.7px;overflow:visible;" width="36" height="60" viewBox="0 0 36 60"><defs><linearGradient id="fg" x1="0" y1="0" x2="1" y2="0"><stop offset="0" stop-color="#a6a6a6"/><stop offset="0.3" stop-color="#c6c6c6"/><stop offset="0.62" stop-color="#a2a2a2"/><stop offset="1" stop-color="#7c7c7c"/></linearGradient><linearGradient id="fe" x1="0" y1="0" x2="1" y2="0"><stop offset="0" stop-color="#9c9c9c"/><stop offset="0.5" stop-color="#858585"/><stop offset="1" stop-color="#9a9a9a"/></linearGradient></defs><g filter="url(#blur1)"><path d="M7.6 0.8 Q18.5 4.2 21.8 15.4 L26.8 16.2 L18 24.6 L8.4 16.2 L13.8 15.6 Q13.6 7.4 7.6 0.8 Z" fill="#3567b7"/><path d="M1 30.4 L15.3 47.8 L15.9 58.4 L20.8 51.4 L21 46.8 L34.2 30.4 Z" fill="url(#fg)"/><ellipse cx="17.6" cy="30.2" rx="16.6" ry="3.3" fill="url(#fe)"/></g></svg>
<div class="b" style="left:717.4px;top:1077.7px;width:71.4px;height:71.4px;border-radius:50%;background:#fff;border:3.2px solid #c8c8c8;"></div>
<div class="b" style="left:721.7px;top:1082.0px;width:62.6px;height:62.6px;border-radius:50%;background:#7d1560;"></div>
<span class="t" style="left:718px;top:1098.9px;font-size:21.3px;line-height:28px;color:#fff;width:70px;text-align:center;letter-spacing:0.3px;">D</span>
<svg class="b" style="left:813px;top:1104.1px;" width="20" height="20" viewBox="0 0 20 20"><g fill="none" stroke="#111" stroke-width="2.1" stroke-linecap="round" stroke-linejoin="round"><path d="M8.5 4.2 H4.4 a2 2 0 0 0 -2 2 V15.6 a2 2 0 0 0 2 2 H13.8 a2 2 0 0 0 2 -2 V11.5"/><path d="M12 1.8 H18.2 V8 M18 2 L9.4 10.6"/></g></svg>
<span class="t" style="left:838px;top:1097.5px;font-size:22.8px;line-height:30px;color:#38414f;font-weight:700;letter-spacing:0.06px;transform:scaleX(1.009);transform-origin:0 50%;">David</span>
<span class="t" style="left:986px;top:1097.5px;font-size:22.8px;line-height:30px;color:#38414f;font-weight:700;letter-spacing:0.17px;transform:scaleX(1.027);transform-origin:0 50%;">Walker</span>
<span class="t lnk" style="left:1134px;top:1097.5px;font-size:22.8px;line-height:30px;color:#2f71e0;letter-spacing:0.28px;transform:scaleX(1.046);transform-origin:0 50%;">davidwalker20202@gmail.com</span>
<span class="t" style="left:2070.6px;top:1081.8px;font-size:22.8px;line-height:30px;color:#3d4657;letter-spacing:0.17px;transform:scaleX(1.027);transform-origin:0 50%;">Website</span><span class="t" style="left:2070.6px;top:1114.8px;font-size:22.8px;line-height:30px;color:#3d4657;letter-spacing:0.14px;transform:scaleX(1.022);transform-origin:0 50%;">Signup</span>
<span class="t" style="left:2201px;top:1081.8px;font-size:22.8px;line-height:30px;color:#3d4657;letter-spacing:0.27px;transform:scaleX(1.050);transform-origin:0 50%;">6/25/2024,</span><span class="t" style="left:2201px;top:1114.8px;font-size:22.8px;line-height:30px;color:#3d4657;letter-spacing:-0.02px;transform:scaleX(0.997);transform-origin:0 50%;">6:56 AM</span>
<svg class="b" style="left:2402.6px;top:1103.7px;" width="28.6" height="22" viewBox="0 0 28.6 22"><g fill="none" stroke="#0a0a0a" stroke-width="2.1" stroke-linecap="round" stroke-linejoin="round"><rect x="1.1" y="1.1" width="26.4" height="19.8" rx="3.6"/><path d="M1.7 6.4 L12.6 14.5 Q14.3 15.7 16 14.5 L26.9 6.4"/></g></svg>
<div class="b" style="left:2528px;top:1086.5px;width:198px;height:53.4px;background:#f8f8f9;border:1.5px solid #ececf0;border-radius:11px;"></div>
<span class="t" style="left:2543px;top:1097.7px;font-size:22.8px;line-height:30px;color:#555;letter-spacing:0.14px;transform:scaleX(1.022);transform-origin:0 50%;">Assigned</span>
<svg class="b" style="left:2696.0px;top:1108.35px;" width="13" height="7.5" viewBox="0 0 13 7.5"><path d="M1.2 0.8 H11.8 L6.5 6.9 Z" fill="#222" stroke="#222" stroke-width="1.2" stroke-linejoin="round"/></svg>
<div class="b" style="left:449px;top:1162px;width:2373px;height:90px;background:#fff;border-radius:11px;box-shadow:0 3px 0 0 #e9ebf2;"></div>
<div class="b" style="left:471.2px;top:1191.1px;width:27px;height:27px;background:#fff;border:2px solid #767676;border-radius:5.5px;"></div>
<svg class="b" style="left:522.86px;top:1186.8px;" width="31.6" height="31.6" viewBox="0 0 30 30"><path d="M12.6 5.5 H7.2 a4 4 0 0 0 -4 4 V22.8 a4 4 0 0 0 4 4 H20.6 a4 4 0 0 0 4 -4 V17.6" fill="none" stroke="#0a0a0a" stroke-width="2.15" stroke-linecap="round"/><g transform="translate(0.6 -0.9)"><path d="M11.2 15.6 L22.8 3.9 a2.7 2.7 0 0 1 3.8 0 l0.3 0.3 a2.7 2.7 0 0 1 0 3.8 L15.3 19.7 L9.8 21.1 Z" fill="#fff" stroke="#0a0a0a" stroke-width="2.05" stroke-linejoin="round"/><path d="M20.5 6.3 L24.5 10.3" stroke="#0a0a0a" stroke-width="2" stroke-linecap="round"/></g></svg>
<svg class="b" style="left:574px;top:1187.85px;" width="24.8" height="28.8" viewBox="0 0 24.8 28.8"><g fill="none" stroke="#ea6b68" stroke-width="1.9" stroke-linecap="round" stroke-linejoin="round"><path d="M1 4.2 H23.8"/><path d="M6.6 4 L8.2 1.8 Q8.7 1 9.6 1 H15.2 Q16.1 1 16.6 1.8 L18.2 4"/><path d="M2.7 4.4 L3.4 23.6 Q3.6 27.8 7.6 27.8 H17.2 Q21.2 27.8 21.4 23.6 L22.1 4.4"/><path d="M7.1 9.4 V22.8 M12.4 9.4 V22.8 M17.7 9.4 V22.8"/></g></svg>
<svg class="b" style="left:647px;top:1176.7px;overflow:visible;" width="36" height="60" viewBox="0 0 36 60"><defs><linearGradient id="fg" x1="0" y1="0" x2="1" y2="0"><stop offset="0" stop-color="#a6a6a6"/><stop offset="0.3" stop-color="#c6c6c6"/><stop offset="0.62" stop-color="#a2a2a2"/><stop offset="1" stop-color="#7c7c7c"/></linearGradient><linearGradient id="fe" x1="0" y1="0" x2="1" y2="0"><stop offset="0" stop-color="#9c9c9c"/><stop offset="0.5" stop-color="#858585"/><stop offset="1" stop-color="#9a9a9a"/></linearGradient></defs><g filter="url(#blur1)"><path d="M7.6 0.8 Q18.5 4.2 21.8 15.4 L26.8 16.2 L18 24.6 L8.4 16.2 L13.8 15.6 Q13.6 7.4 7.6 0.8 Z" fill="#3567b7"/><path d="M1 30.4 L15.3 47.8 L15.9 58.4 L20.8 51.4 L21 46.8 L34.2 30.4 Z" fill="url(#fg)"/><ellipse cx="17.6" cy="30.2" rx="16.6" ry="3.3" fill="url(#fe)"/></g></svg>
<div class="b" style="left:717.4px;top:1170.7px;width:71.4px;height:71.4px;border-radius:50%;background:#fff;border:3.2px solid #c8c8c8;"></div>
<div class="b" style="left:721.7px;top:1175.0px;width:62.6px;height:62.6px;border-radius:50%;background:#7d1560;"></div>
<span class="t" style="left:718px;top:1191.9px;font-size:21.3px;line-height:28px;color:#fff;width:70px;text-align:center;letter-spacing:0.3px;">D</span>
<svg class="b" style="left:813px;top:1197.1px;" width="20" height="20" viewBox="0 0 20 20"><g fill="none" stroke="#111" stroke-width="2.1" stroke-linecap="round" stroke-linejoin="round"><path d="M8.5 4.2 H4.4 a2 2 0 0 0 -2 2 V15.6 a2 2 0 0 0 2 2 H13.8 a2 2 0 0 0 2 -2 V11.5"/><path d="M12 1.8 H18.2 V8 M18 2 L9.4 10.6"/></g></svg>
<span class="t" style="left:838px;top:1190.5px;font-size:22.8px;line-height:30px;color:#38414f;font-weight:700;letter-spacing:0.06px;transform:scaleX(1.009);transform-origin:0 50%;">David</span>
<span class="t" style="left:986px;top:1190.5px;font-size:22.8px;line-height:30px;color:#38414f;font-weight:700;letter-spacing:0.03px;transform:scaleX(1.004);transform-origin:0 50%;">Test</span>
<span class="t lnk" style="left:1134px;top:1190.5px;font-size:22.8px;line-height:30px;color:#2f71e0;letter-spacing:0.35px;transform:scaleX(1.061);transform-origin:0 50%;">davidtestingemail2@gmail.com</span>
<span class="t" style="left:2070.6px;top:1174.8px;font-size:22.8px;line-height:30px;color:#3d4657;letter-spacing:0.17px;transform:scaleX(1.027);transform-origin:0 50%;">Website</span><span class="t" style="left:2070.6px;top:1207.8px;font-size:22.8px;line-height:30px;color:#3d4657;letter-spacing:0.14px;transform:scaleX(1.022);transform-origin:0 50%;">Signup</span>
<span class="t" style="left:2201px;top:1174.8px;font-size:22.8px;line-height:30px;color:#3d4657;letter-spacing:0.27px;transform:scaleX(1.050);transform-origin:0 50%;">6/25/2024,</span><span class="t" style="left:2201px;top:1207.8px;font-size:22.8px;line-height:30px;color:#3d4657;letter-spacing:-0.02px;transform:scaleX(0.997);transform-origin:0 50%;">6:56 AM</span>
<svg class="b" style="left:2402.6px;top:1196.7px;" width="28.6" height="22" viewBox="0 0 28.6 22"><g fill="none" stroke="#0a0a0a" stroke-width="2.1" stroke-linecap="round" stroke-linejoin="round"><rect x="1.1" y="1.1" width="26.4" height="19.8" rx="3.6"/><path d="M1.7 6.4 L12.6 14.5 Q14.3 15.7 16 14.5 L26.9 6.4"/></g></svg>
<div class="b" style="left:2528px;top:1179.5px;width:198px;height:53.4px;background:#f8f8f9;border:1.5px solid #ececf0;border-radius:11px;"></div>
<span class="t" style="left:2543px;top:1190.7px;font-size:22.8px;line-height:30px;color:#555;letter-spacing:0.14px;transform:scaleX(1.022);transform-origin:0 50%;">Assigned</span>
<svg class="b" style="left:2696.0px;top:1201.35px;" width="13" height="7.5" viewBox="0 0 13 7.5"><path d="M1.2 0.8 H11.8 L6.5 6.9 Z" fill="#222" stroke="#222" stroke-width="1.2" stroke-linejoin="round"/></svg>
<div class="b" style="left:449px;top:1255px;width:2373px;height:90px;background:#fff;border-radius:11px;box-shadow:0 3px 0 0 #e9ebf2;"></div>
<div class="b" style="left:471.2px;top:1284.1px;width:27px;height:27px;background:#fff;border:2px solid #767676;border-radius:5.5px;"></div>
<svg class="b" style="left:522.86px;top:1279.8px;" width="31.6" height="31.6" viewBox="0 0 30 30"><path d="M12.6 5.5 H7.2 a4 4 0 0 0 -4 4 V22.8 a4 4 0 0 0 4 4 H20.6 a4 4 0 0 0 4 -4 V17.6" fill="none" stroke="#0a0a0a" stroke-width="2.15" stroke-linecap="round"/><g transform="translate(0.6 -0.9)"><path d="M11.2 15.6 L22.8 3.9 a2.7 2.7 0 0 1 3.8 0 l0.3 0.3 a2.7 2.7 0 0 1 0 3.8 L15.3 19.7 L9.8 21.1 Z" fill="#fff" stroke="#0a0a0a" stroke-width="2.05" stroke-linejoin="round"/><path d="M20.5 6.3 L24.5 10.3" stroke="#0a0a0a" stroke-width="2" stroke-linecap="round"/></g></svg>
<svg class="b" style="left:574px;top:1280.85px;" width="24.8" height="28.8" viewBox="0 0 24.8 28.8"><g fill="none" stroke="#ea6b68" stroke-width="1.9" stroke-linecap="round" stroke-linejoin="round"><path d="M1 4.2 H23.8"/><path d="M6.6 4 L8.2 1.8 Q8.7 1 9.6 1 H15.2 Q16.1 1 16.6 1.8 L18.2 4"/><path d="M2.7 4.4 L3.4 23.6 Q3.6 27.8 7.6 27.8 H17.2 Q21.2 27.8 21.4 23.6 L22.1 4.4"/><path d="M7.1 9.4 V22.8 M12.4 9.4 V22.8 M17.7 9.4 V22.8"/></g></svg>
<svg class="b" style="left:647px;top:1269.7px;overflow:visible;" width="36" height="60" viewBox="0 0 36 60"><defs><linearGradient id="fg" x1="0" y1="0" x2="1" y2="0"><stop offset="0" stop-color="#a6a6a6"/><stop offset="0.3" stop-color="#c6c6c6"/><stop offset="0.62" stop-color="#a2a2a2"/><stop offset="1" stop-color="#7c7c7c"/></linearGradient><linearGradient id="fe" x1="0" y1="0" x2="1" y2="0"><stop offset="0" stop-color="#9c9c9c"/><stop offset="0.5" stop-color="#858585"/><stop offset="1" stop-color="#9a9a9a"/></linearGradient></defs><g filter="url(#blur1)"><path d="M7.6 0.8 Q18.5 4.2 21.8 15.4 L26.8 16.2 L18 24.6 L8.4 16.2 L13.8 15.6 Q13.6 7.4 7.6 0.8 Z" fill="#3567b7"/><path d="M1 30.4 L15.3 47.8 L15.9 58.4 L20.8 51.4 L21 46.8 L34.2 30.4 Z" fill="url(#fg)"/><ellipse cx="17.6" cy="30.2" rx="16.6" ry="3.3" fill="url(#fe)"/></g></svg>
<div class="b" style="left:717.4px;top:1263.7px;width:71.4px;height:71.4px;border-radius:50%;background:#fff;border:3.2px solid #c8c8c8;"></div>
<div class="b" style="left:721.7px;top:1268.0px;width:62.6px;height:62.6px;border-radius:50%;background:#76fafa;"></div>
<span class="t" style="left:718px;top:1284.9px;font-size:21.3px;line-height:28px;color:#fff;width:70px;text-align:center;letter-spacing:0.3px;">T</span>
<svg class="b" style="left:813px;top:1290.1px;" width="20" height="20" viewBox="0 0 20 20"><g fill="none" stroke="#111" stroke-width="2.1" stroke-linecap="round" stroke-linejoin="round"><path d="M8.5 4.2 H4.4 a2 2 0 0 0 -2 2 V15.6 a2 2 0 0 0 2 2 H13.8 a2 2 0 0 0 2 -2 V11.5"/><path d="M12 1.8 H18.2 V8 M18 2 L9.4 10.6"/></g></svg>
<span class="t" style="left:838px;top:1283.5px;font-size:22.8px;line-height:30px;color:#38414f;font-weight:700;letter-spacing:0.03px;transform:scaleX(1.004);transform-origin:0 50%;">Test</span>
<span class="t" style="left:986px;top:1283.5px;font-size:22.8px;line-height:30px;color:#38414f;font-weight:700;letter-spacing:0.03px;transform:scaleX(1.004);transform-origin:0 50%;">Test</span>
<span class="t lnk" style="left:1134px;top:1283.5px;font-size:22.8px;line-height:30px;color:#2f71e0;letter-spacing:0.34px;transform:scaleX(1.059);transform-origin:0 50%;">lbarenblit+8890@gmail.com</span>
<span class="t" style="left:2070.6px;top:1267.8px;font-size:22.8px;line-height:30px;color:#3d4657;letter-spacing:0.17px;transform:scaleX(1.027);transform-origin:0 50%;">Website</span><span class="t" style="left:2070.6px;top:1300.8px;font-size:22.8px;line-height:30px;color:#3d4657;letter-spacing:0.14px;transform:scaleX(1.022);transform-origin:0 50%;">Signup</span>
<span class="t" style="left:2201px;top:1267.8px;font-size:22.8px;line-height:30px;color:#3d4657;letter-spacing:0.27px;transform:scaleX(1.050);transform-origin:0 50%;">6/25/2024,</span><span class="t" style="left:2201px;top:1300.8px;font-size:22.8px;line-height:30px;color:#3d4657;letter-spacing:-0.02px;transform:scaleX(0.997);transform-origin:0 50%;">6:56 AM</span>
<svg class="b" style="left:2402.6px;top:1289.7px;" width="28.6" height="22" viewBox="0 0 28.6 22"><g fill="none" stroke="#0a0a0a" stroke-width="2.1" stroke-linecap="round" stroke-linejoin="round"><rect x="1.1" y="1.1" width="26.4" height="19.8" rx="3.6"/><path d="M1.7 6.4 L12.6 14.5 Q14.3 15.7 16 14.5 L26.9 6.4"/></g></svg>
<div class="b" style="left:2528px;top:1272.5px;width:198px;height:53.4px;background:#f8f8f9;border:1.5px solid #ececf0;border-radius:11px;"></div>
<span class="t" style="left:2543px;top:1283.7px;font-size:22.8px;line-height:30px;color:#555;letter-spacing:0.14px;transform:scaleX(1.022);transform-origin:0 50%;">Assigned</span>
<svg class="b" style="left:2696.0px;top:1294.35px;" width="13" height="7.5" viewBox="0 0 13 7.5"><path d="M1.2 0.8 H11.8 L6.5 6.9 Z" fill="#222" stroke="#222" stroke-width="1.2" stroke-linejoin="round"/></svg>
</div></div>
<div class="b" style="left:2824px;top:464px;width:17px;height:855px;background:#efeff1;border-radius:9px;"></div>
<div class="b" style="left:2824px;top:572px;width:17px;height:76px;background:#c9c9cc;border-radius:9px;"></div>
<div class="b" style="left:431px;top:774px;width:113px;height:291px;border:10px solid #e84ff6;border-radius:25px;"></div>
</body></html>
